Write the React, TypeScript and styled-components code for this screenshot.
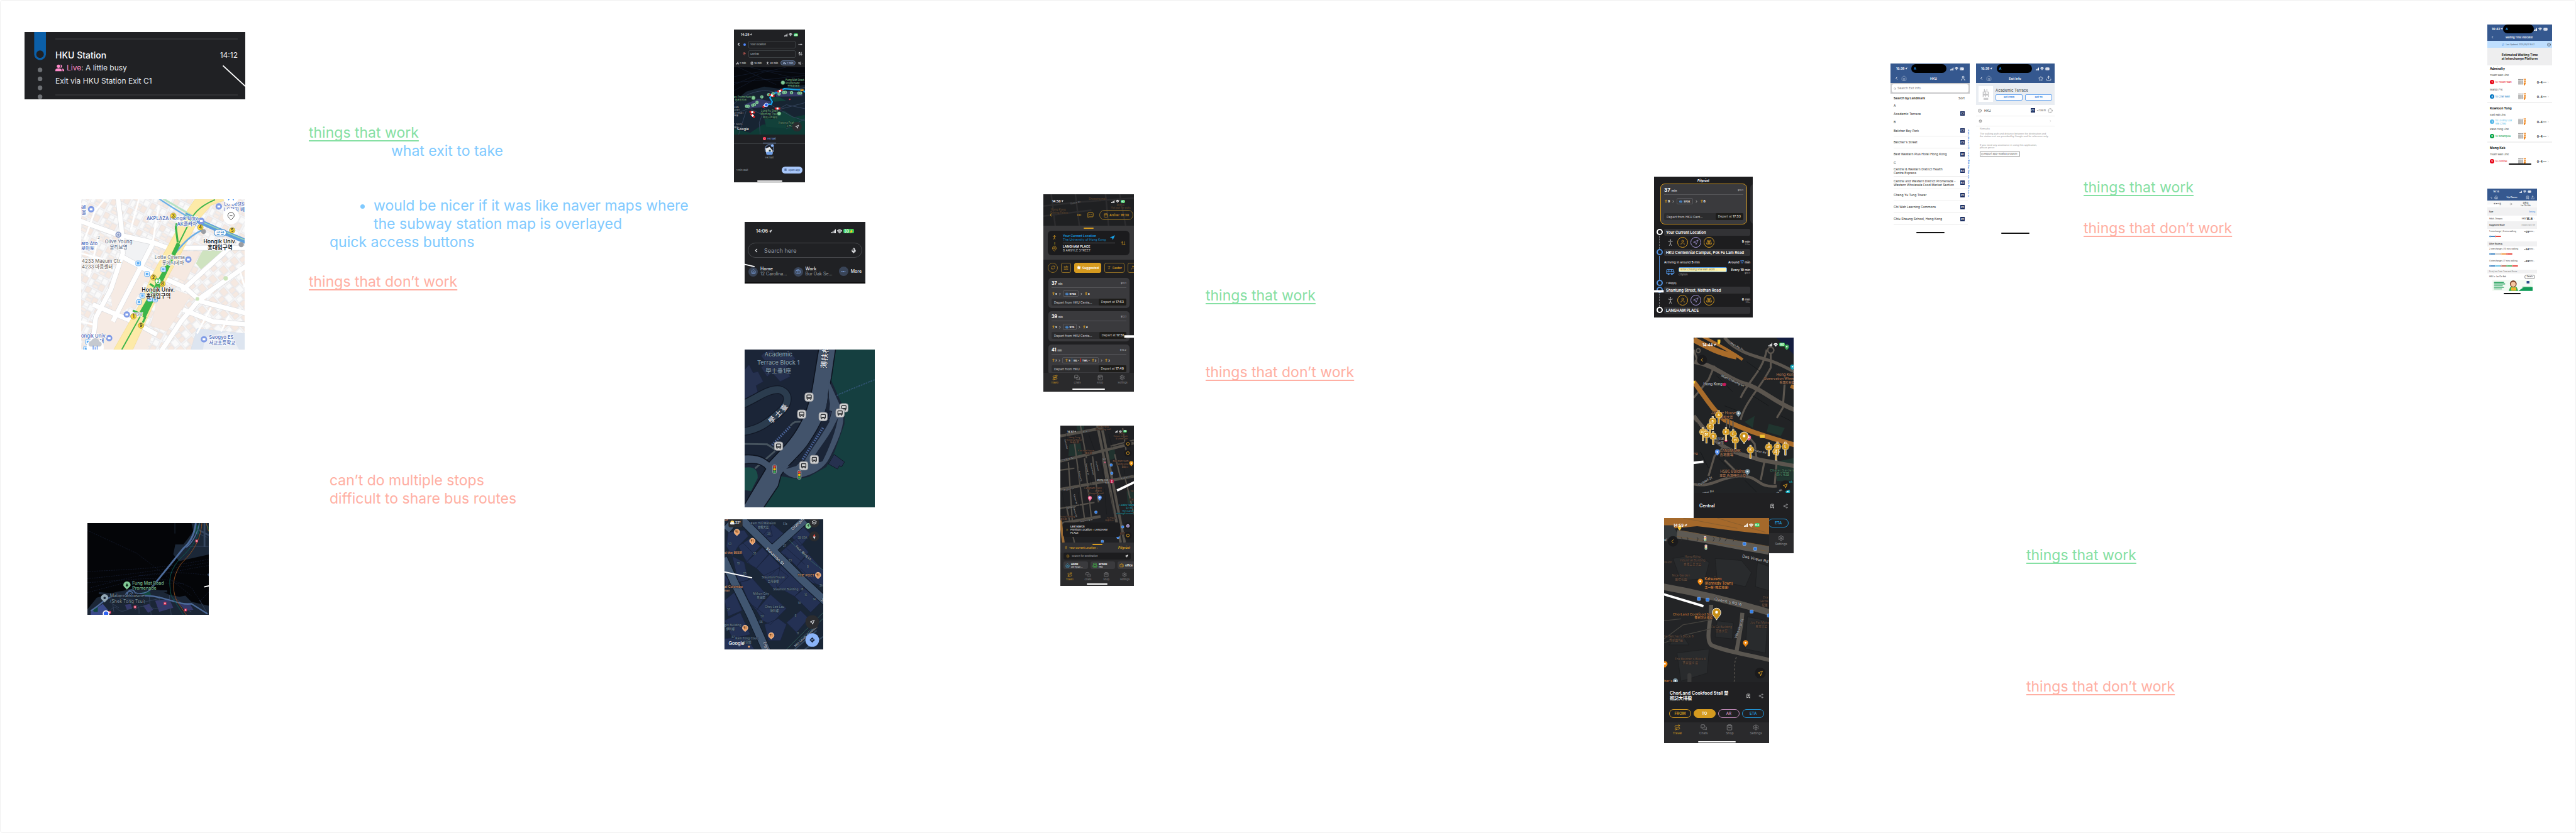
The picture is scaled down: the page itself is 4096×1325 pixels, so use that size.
import React from "react";
import styled, { createGlobalStyle, css } from "styled-components";
import {
  ArrowRight, ArrowUpDown, Bike, Binoculars, BookmarkPlus, Briefcase, Bus, Calendar, Car, ChevronLeft,
  ChevronRight, Crosshair, Ellipsis, House, Info, MapPin, MessageSquareMore, MessagesSquare, Mic, Navigation,
  PersonStanding, Plane, RefreshCw, Route, School, Search, Settings, Share2, ShoppingBag, SlidersHorizontal,
  Star, TrainFront, Upload, User, Wifi,
} from "lucide-react";

const GlobalStyle = createGlobalStyle`
  * { box-sizing: border-box; }
  body { margin: 0; background: #fff; font-family: Inter, "Noto Sans CJK SC", sans-serif; }
  button, input { font: inherit; color: inherit; margin: 0; padding: 0; border: 0; background: none; }
  h1, h2, h3, p, ul { margin: 0; padding: 0; font: inherit; list-style: none; }
  svg { display: block; flex: none; }
`;

/* ---------- board ---------- */

const Board = styled.main`
  position: relative;
  min-height: 100vh;
  border: 1px solid #f1f1f1;
  border-radius: 4px;
  overflow: hidden;
`;

const Pin = styled.section<{ $x: number; $y: number; $w: number; $h?: number; $bg?: string; $fg?: string }>`
  position: absolute;
  left: ${(p) => p.$x}px;
  top: ${(p) => p.$y}px;
  width: ${(p) => p.$w}px;
  ${(p) => p.$h && css`height: ${p.$h}px;`}
  background: ${(p) => p.$bg ?? "transparent"};
  color: ${(p) => p.$fg ?? "#fff"};
  overflow: hidden;
  display: flex;
  flex-direction: column;
`;

const Connectors = styled.svg`
  position: absolute;
  left: 0;
  top: 0;
  width: 4096px;
  height: 1325px;
  pointer-events: none;
  stroke: #fff;
`;

const GREEN = "#85e0a3";
const RED = "#ffafa3";
const BLUE = "#80caff";

const Note = styled.div<{ $x: number; $y: number; $tone: string }>`
  position: absolute;
  left: ${(p) => p.$x}px;
  top: ${(p) => p.$y}px;
  color: ${(p) => p.$tone};
  font-size: 23px;
  font-weight: 400;
  line-height: 29px;
  white-space: nowrap;
`;
const NoteTitle = styled.h2<{ $tone?: string }>`
  color: ${(p) => p.$tone ?? "inherit"};
  text-decoration: underline;
  text-decoration-thickness: 2px;
  text-decoration-skip-ink: none;
  text-underline-offset: 4px;
`;
const NoteLine = styled.p<{ $in: number }>`
  padding-left: ${(p) => p.$in}px;
`;
const NoteBullet = styled.li`
  display: list-item;
  list-style: disc outside;
  margin: 58px 0 0 103px;
`;

/* ---------- shared pieces ---------- */

const Row = styled.div<{ $h?: number; $gap?: number; $px?: number; $pl?: number; $j?: string; $a?: string; $bg?: string; $grow?: boolean }>`
  display: flex;
  flex: ${(p) => (p.$grow ? "1" : "none")};
  align-items: ${(p) => p.$a ?? "center"};
  justify-content: ${(p) => p.$j ?? "flex-start"};
  gap: ${(p) => p.$gap ?? 0}px;
  padding: 0 ${(p) => p.$px ?? 0}px;
  ${(p) => p.$pl && css`padding-left: ${p.$pl}px;`}
  ${(p) => p.$h && css`height: ${p.$h}px;`}
  ${(p) => p.$bg && css`background: ${p.$bg};`}
`;
const Col = styled.div<{ $gap?: number; $grow?: boolean; $a?: string; $px?: number }>`
  display: flex;
  flex-direction: column;
  min-width: 0;
  gap: ${(p) => p.$gap ?? 0}px;
  padding: 0 ${(p) => p.$px ?? 0}px;
  align-items: ${(p) => p.$a ?? "stretch"};
  ${(p) => p.$grow && css`flex: 1;`}
`;
const Txt = styled.span<{ $s?: number; $w?: number; $c?: string }>`
  font-size: ${(p) => p.$s ?? 5}px;
  line-height: ${(p) => (p.$s ?? 5) + 1}px;
  font-weight: ${(p) => p.$w ?? 400};
  color: ${(p) => p.$c ?? "inherit"};
  white-space: nowrap;
`;
const MapArt = styled.svg<{ $h: number }>`
  width: 100%;
  height: ${(p) => p.$h}px;
  flex: none;
`;
const HomeBar = styled.div<{ $w: number; $c?: string }>`
  width: ${(p) => p.$w}px;
  height: 2px;
  border-radius: 1px;
  background: ${(p) => p.$c ?? "#fff"};
  margin: 0 auto;
  flex: none;
`;
const StatusRow = styled.header<{ $h: number; $px: number; $over?: boolean }>`
  display: flex;
  flex: none;
  align-items: center;
  justify-content: space-between;
  height: ${(p) => p.$h}px;
  padding: 0 ${(p) => p.$px}px;
  ${(p) => p.$over && css`position: absolute; left: 0; right: 0; top: 0;`}
`;
const Battery = styled.span<{ $bg: string; $s: number }>`
  background: ${(p) => p.$bg};
  color: #fff;
  border-radius: 2px;
  font-size: ${(p) => p.$s}px;
  line-height: ${(p) => p.$s + 1}px;
  font-weight: 700;
  padding: 0 1px;
`;
const Island = styled.span`
  width: 56px;
  height: 14px;
  border-radius: 7px;
  background: #000;
  color: #2196f3;
  font-size: 5px;
  font-weight: 700;
  line-height: 14px;
  padding-left: 4px;
`;
const Signal = ({ s = 5 }: { s?: number }) => (
  <svg width={s} height={s} viewBox="0 0 10 10" fill="currentColor">
    <path d="M0 7h2v3H0zM2.7 5.5h2V10h-2zM5.4 3.5h2V10h-2zM8 1h2v9H8z" />
  </svg>
);
function Status(p: { time: string; pct: string; h: number; px: number; s?: number; tone?: string; island?: boolean; over?: boolean; plain?: boolean }) {
  const s = p.s ?? 5;
  return (
    <StatusRow $h={p.h} $px={p.px} $over={p.over}>
      <Row $gap={1}>
        <Txt $s={s} $w={600}>{p.time}</Txt>
        {!p.plain && <Navigation size={s - 1} fill="currentColor" strokeWidth={1} />}
      </Row>
      {p.island && <Island>A</Island>}
      <Row $gap={2}>
        <Signal s={s} />
        <Wifi size={s + 1} strokeWidth={4} />
        <Battery $bg={p.tone ?? "#34c759"} $s={s - 1}>{p.pct}</Battery>
      </Row>
    </StatusRow>
  );
}

type L = [number, number, string, number, string?, number?, string?, number?];
/* x, y, text, size, fill, rotation, anchor, weight */
const LabelGroup = styled.g`
  paint-order: stroke;
  stroke-linejoin: round;
`;
function Labels({ items, fill, halo, hw = 4 }: { items: L[]; fill: string; halo: string; hw?: number }) {
  return (
    <LabelGroup stroke={halo} strokeWidth={hw}>
      {items.map(([x, y, t, s, c, r, a, w], i) => (
        <text key={i} x={x} y={y} fontSize={s} fill={c ?? fill} textAnchor={(a ?? "middle") as "middle"}
          fontWeight={w ?? 500} transform={r ? `rotate(${r} ${x} ${y})` : undefined}>{t}</text>
      ))}
    </LabelGroup>
  );
}
const Drop = ({ x, y, c, r = 12 }: { x: number; y: number; c: string; r?: number }) => (
  <g transform={`translate(${x} ${y}) scale(${r / 12})`}>
    <path d="M0 18C-4 11-12 8-12-1a12 12 0 0 1 24 0C12 8 4 11 0 18Z" fill={c} />
    <circle r="4" cy="-1" fill="#fff" />
  </g>
);

/* ---------- station card ---------- */

const StationBody = styled.div`
  display: grid;
  grid-template-columns: 49px 1fr;
  padding-right: 12px;
  height: 107px;
`;
const StationInfo = styled.div`
  margin: 10px 0 6px;
  border-top: 2px solid #303134;
  border-bottom: 2px solid #303134;
  padding-top: 14px;
  display: flex;
  flex-direction: column;
`;
function StationCard() {
  return (
    <Pin $x={38} $y={50} $w={351} $h={107} $bg="#202124" $fg="#e8eaed">
      <StationBody>
        <svg width="49" height="107" viewBox="0 0 147 322">
          <path d="M46 0h56v106a28 28 0 0 1-56 0Z" fill="#0b5fa8" />
          <circle cx="74" cy="106" r="18" fill="#202124" />
          {[181, 224, 267, 310].map((y) => <circle key={y} cx="74" cy={y} r="11" fill="#6d7074" />)}
        </svg>
        <StationInfo>
          <Row $j="space-between" $h={20}>
            <Txt $s={14} $w={500} $c="#fff">HKU Station</Txt>
            <Txt $s={12}>14:12</Txt>
          </Row>
          <Row $gap={4} $h={21}>
            <svg width="14" height="12" viewBox="0 0 42 34" fill="#ff8bcb">
              <circle cx="15" cy="9" r="8" /><path d="M0 33v-5c0-7 8-9 15-9s15 2 15 9v5Z" />
              <path d="M24 1a8 8 0 1 1 0 16c4-5 4-11 0-16ZM31 20c7 1 11 4 11 8v5h-8v-5c0-3-1-6-3-8Z" />
            </svg>
            <Txt $s={12}><Txt as="b" $s={12} $w={400} $c="#ff8bcb">Live</Txt>: A little busy</Txt>
          </Row>
          <Row $h={21}><Txt $s={12}>Exit via HKU Station Exit C1</Txt></Row>
        </StationInfo>
      </StationBody>
    </Pin>
  );
}

/* ---------- Hongik map ---------- */

const HONGIK_ROADS = "M30 135 220 205 400 245 520 290M235 310 400 400 560 470 640 540 870 600M225 20 242 160 250 300 190 480 115 620 95 790M400 250 200 640M870 360 640 520 540 640 440 790M100 555 300 640 420 705M550 580 700 640 870 655M790 265 545 485M500 272H870";

function HongikMap() {
  const exits: [number, number, string][] = [[502, 112, "3"], [637, 170, "4"], [796, 185, "5"], [403, 420, "2"], [448, 452, "8"], [303, 614, "1"], [341, 660, "9"]];
  const stops = [[327, 350], [371, 403], [452, 380], [348, 511], [385, 527], [411, 530], [331, 543], [76, 742], [66, 776]];
  const pois = [[92, 80], [729, 66], [642, 138], [577, 331], [270, 605], [182, 723], [655, 729]];
  return (
    <Pin $x={128} $y={316} $w={260} $h={239}>
      <MapArt $h={239} viewBox="42 30 816 750" preserveAspectRatio="xMidYMid slice">
        <defs>
          <pattern id="blocks" width="92" height="74" patternUnits="userSpaceOnUse" patternTransform="rotate(28)">
            <rect width="92" height="74" fill="#f5f5f6" />
            <g stroke="#d9dadd" strokeWidth="1.5">
              <path fill="#f6e9e1" d="M4 4h26v28H4zM60 38h26v32H60z" /><path fill="#fafafa" d="M33 4h24v20H33zM60 4h28v30H60zM4 36h20v34H4z" />
              <path fill="#f8ede6" d="M28 36h28v14H28zM28 54h28v16H28z" />
            </g>
          </pattern>
          <pattern id="blocks2" width="70" height="84" patternUnits="userSpaceOnUse" patternTransform="rotate(-40)">
            <rect width="70" height="84" fill="#f5f5f6" />
            <g stroke="#d9dadd" strokeWidth="1.5">
              <path fill="#fafafa" d="M4 4h28v24H4zM36 44h30v36H36z" /><path fill="#f6e9e1" d="M36 4h30v36H36zM4 32h28v22H4zM4 58h28v22H4z" />
            </g>
          </pattern>
        </defs>
        <rect x="42" y="30" width="816" height="750" fill="url(#blocks)" />
        <path d="M560 470 780 270H858V780H450L540 640Z" fill="url(#blocks2)" />
        <path d="M120 560 240 620 330 660 400 700 370 780H110Z" fill="#f6ebe4" />
        <path d="M190 480 250 330 380 400 300 560 200 620Z" fill="#f6ebe4" />
        <path d="M420 540 500 480 590 510 470 690 390 660Z" fill="#f6e9e1" stroke="#e5d8cf" />
        <path d="M520 290H640L560 440 470 400Z" fill="#f6e9e1" stroke="#e5d8cf" />
        <path d="M265 225 395 255 345 350 255 320Z" fill="#f1f2f4" stroke="#dcdde0" />
        <path d="M640 300 655 275H785L700 330 640 380 615 350Z" fill="#cfe3c0" />
        <path d="M620 675 858 700V780H590Z" fill="#dde5f0" stroke="#c9d4e4" /><path d="M660 720 780 690 830 780H650Z" fill="#eceff4" />
        <path fill="none" stroke="#d8d9dc" strokeWidth="27" d={HONGIK_ROADS} />
        <path fill="none" stroke="#fff" strokeWidth="23" d={HONGIK_ROADS} />
        <path fill="none" stroke="#fff" strokeWidth="9" d="M60 230 110 90 160 30M330 30 290 180M430 60 400 240M690 570 620 700M780 610 740 690M830 370 858 470M42 640 120 660M640 540 720 470M130 210 80 420M42 300 230 350" />
        <path d="M205 780 330 560 400 400 510 200 575 80 610 30H770L690 60 630 130 540 300 430 500 300 780Z" fill="#fdeaa8" stroke="#f3d98a" strokeWidth="2" />
        <g fill="none">
          <path d="M432 28C480 60 540 100 600 130" stroke="#6bb1e8" strokeWidth="7" /><path d="M450 26 600 115" stroke="#b6e2c2" strokeWidth="9" />
          <path d="M560 108 720 180 870 243" stroke="#5e9fdc" strokeWidth="24" /><path d="M560 105 720 175 870 238" stroke="#9ed8b0" strokeWidth="5" />
          <path d="M515 295C560 240 590 210 650 182" stroke="#69ade6" strokeWidth="8" />
          <path d="M245 780 345 600M525 260 580 150C600 110 620 70 710 32" stroke="#3cb54a" strokeWidth="6" />
          <path d="M514 165 524 245M514 180 519 150M385 452 405 465M350 610 362 620 350 645M300 585 335 600" stroke="#3cb54a" strokeWidth="10" />
        </g>
        <path d="M520 245 537 257 365 618 332 595 410 460 480 330Z" fill="#3cb54a" />
        {stops.map(([x, y]) => <g key={x}><rect x={x - 12} y={y - 12} width="24" height="24" rx="5" fill="#e9f4ff" stroke="#5badf5" strokeWidth="3" /><path d={`M${x - 6} ${y - 6}h12v11h-12z`} fill="#5badf5" /></g>)}
        {pois.map(([x, y]) => <g key={x}><circle cx={x} cy={y} r="16" fill="#7f9be6" /><path d={`M${x - 7} ${y - 5}h14v10h-14z`} fill="#fff" /></g>)}
        <circle cx="228" cy="207" r="15" fill="#8b9cc8" /><circle cx="228" cy="207" r="8" fill="none" stroke="#fff" strokeWidth="3" />
        <circle cx="763" cy="425" r="11" fill="#cbe4b9" /><circle cx="622" cy="527" r="9" fill="#cbe4b9" />
        <circle cx="841" cy="256" r="13" fill="#9a9da3" /><circle cx="653" cy="191" r="12" fill="#9a9da3" />
        <Labels halo="#fff" fill="#4a68b8" hw={5} items={[
          [42, 76, "all", 24, undefined, 0, "start"], [45, 104, "볼", 24, undefined, 0, "start"],
          [500, 133, "AKPLAZA Hongik Univ.", 24], [570, 162, "AK플라자", 24],
          [755, 62, "LG Bestsh", 24, undefined, 0, "start"], [755, 90, "LG전자 베스", 24, undefined, 0, "start"],
          [229, 250, "Olive Young", 24, "#6a7590"], [229, 278, "올리브영", 24, "#6a7590"],
          [42, 259, "aro Ato", 24, undefined, 0, "start"], [42, 285, "로아토", 24, undefined, 0, "start"],
          [45, 348, "4233 Maeum Ctr.", 24, "#77706c", 0, "start"], [45, 376, "4233 마음센터", 24, "#77706c", 0, "start"],
          [484, 328, "Lotte Cinema", 24, "#7c7f88"], [500, 356, "롯데시네마", 24, "#7c7f88"],
          [735, 250, "Hongik Univ.", 27, "#222", 0, "middle", 600], [735, 282, "홍대입구역", 27, "#222", 0, "middle", 600],
          [427, 491, "Hongik Univ.", 27, "#222", 0, "middle", 600], [427, 523, "홍대입구역", 27, "#222", 0, "middle", 600],
          [42, 719, "ongik Univ.", 24, undefined, 0, "start"], [145, 747, "대", 24],
          [680, 726, "Seogyo ES", 24, undefined, 0, "start"], [680, 754, "서교초등학교", 24, undefined, 0, "start"],
          [325, 613, "CGV", 22, "#7c7f88"], [130, 228, "2", 20, "#8a8a8a"],
        ]} />
        {exits.map(([x, y, t]) => <g key={t}><circle cx={x} cy={y} r="14" fill="#fcd93a" stroke="#8a7a30" strokeWidth="2" /><text x={x} y={y + 8} fontSize="22" fontWeight="600" textAnchor="middle" fill="#333">{t}</text></g>)}
        <circle cx="426" cy="439" r="15" fill="#fff" stroke="#3cb54a" strokeWidth="4" /><text x="426" y="447" fontSize="22" fontWeight="700" textAnchor="middle" fill="#3cb54a">2</text>
        <rect x="706" y="181" width="60" height="32" rx="15" fill="#fff" stroke="#5a9bd8" strokeWidth="4" /><text x="736" y="206" fontSize="23" fontWeight="600" textAnchor="middle" fill="#4a8fd0">공항</text>
        <circle cx="790" cy="16" r="40" fill="#fff" /><path d="M776 36 790 24 804 36V20H776Z" fill="#1b7cf2" />
        <circle cx="790" cy="115" r="40" fill="#fff" /><path d="M790 133c-5-8-16-12-16-22a16 16 0 0 1 32 0c0 10-11 14-16 22ZM783 111h14" fill="none" stroke="#444" strokeWidth="3" />
        <circle cx="112" cy="768" r="43" fill="#fff" /><path d="M88 765a14 14 0 0 1 4-27 22 22 0 0 1 42 2 13 13 0 0 1 2 25Z" fill="#c5c9d0" /><path d="M102 760v20M112 768v12M122 760v20" stroke="#5b8ff0" strokeWidth="4" />
      </MapArt>
    </Pin>
  );
}

/* ---------- dark coastline map ---------- */

function CoastMap() {
  return (
    <Pin $x={138} $y={831} $w={193} $h={146}>
      <MapArt $h={146} viewBox="42 39 606 456" preserveAspectRatio="xMidYMid slice">
        <rect x="40" y="35" width="612" height="465" fill="#040508" />
        <g fill="none" stroke="#18213a" strokeWidth="2" strokeDasharray="7 5">
          <path d="M42 75 290 190 420 290 560 400M42 280C220 270 400 270 648 218M42 315C220 300 420 270 648 235M60 360C250 310 400 260 648 300M42 335C300 320 420 290 560 360L600 420M300 300C420 300 560 260 648 250M648 380 600 430M42 385 250 330 520 340" />
        </g>
        <path d="M478 39v52" stroke="#1d2a3d" strokeWidth="3" />
        <path d="M560 39H648V195L500 228 470 195 480 145H520L570 80Z" fill="#1b2737" />
        <path d="M42 470 90 410 190 380 270 368 400 372 450 395 500 405 530 400 560 430 648 450V500H42Z" fill="#1b2636" />
        <path d="M100 387 190 395 250 372 330 378 440 378" stroke="#1b2636" strokeWidth="10" fill="none" />
        <path d="M60 478 120 440 145 470 130 495H60Z" fill="#3b4a8a" /><path d="M320 450 350 440 370 470 345 485ZM380 425 450 415 470 460 400 480ZM500 440 550 435 570 470 530 475ZM230 445 260 440 265 465 240 470Z" fill="#35396b" />
        <path d="M70 465 95 455V480H75ZM310 385 350 375 360 395 330 400ZM585 45 600 60 590 95 575 90ZM630 40 648 60V90Z" fill="#12483f" />
        <g fill="none" stroke="#33415a" strokeWidth="3">
          <path d="M150 480C200 420 180 500 240 470S300 440 300 490M150 430 200 460M280 470C330 420 380 500 440 440S520 470 560 480M165 410 175 480M200 410 330 430 420 410M350 400 360 495M590 90 640 110M550 155 645 155M600 420 640 490M400 400V430M450 395 460 500" />
        </g>
        <g fill="none" stroke="#4d6b9a">
          <path d="M582 39C575 90 560 130 520 165L350 375" strokeWidth="9" /><path d="M600 39C590 90 570 130 535 160" strokeWidth="5" />
          <path d="M60 475C120 440 130 405 190 400L340 400C420 400 500 450 560 440L640 490" strokeWidth="7" />
          <path d="M240 395C250 360 275 370 280 385 310 395 340 385 355 370M230 400C240 375 262 372 270 390" strokeWidth="5" />
        </g>
        <path d="M625 39V158M590 70 648 100" stroke="#35465f" strokeWidth="9" fill="none" />
        <path d="M600 39C600 120 560 160 500 220 440 290 450 340 460 400L520 495" stroke="#0c5b50" strokeWidth="3" fill="none" />
        <path d="M612 39C606 130 560 190 510 240 460 310 465 380 490 430L535 495M634 39 645 80" stroke="#91501f" strokeWidth="3" fill="none" />
        {[[586, 128], [429, 438], [280, 456], [154, 483], [531, 471]].map(([x, y]) => <rect key={x} x={x - 5} y={y - 5} width="10" height="10" fill="#f0c5d0" stroke="#e0284f" strokeWidth="3" />)}
        <path d="M130 434C120 422 111 420 111 410a18 18 0 0 1 36 0c0 10-9 12-18 24Z" fill="#93a7b5" /><circle cx="129" cy="411" r="6" fill="#1b2636" />
        <path d="M240 370C230 358 222 356 222 347a18 18 0 0 1 36 0c0 9-9 11-18 23Z" fill="#81c995" /><path d="M240 337l7 14h-5v6h-4v-6h-5Z" fill="#12301f" />
        <circle cx="136" cy="489" r="14" fill="#2f62f0" stroke="#fff" strokeWidth="5" />
        <path d="M638 292 648 289V306Z" fill="#35465f" />
        <Labels halo="#0a0d14" fill="#72b284" hw={3} items={[
          [266, 345, "Fung Mat Road", 22, undefined, 0, "start"], [266, 371, "Promenade", 22, undefined, 0, "start"],
          [155, 409, "Malacca Cuisine", 22, "#7b8d9c", 0, "start"], [155, 435, "(Shek Tong Tsui)", 22, "#7b8d9c", 0, "start"],
        ]} />
      </MapArt>
    </Pin>
  );
}

/* ---------- taxi phone ---------- */

const DarkField = styled.input`
  flex: 1;
  min-width: 0;
  height: 12px;
  border: 1px solid #3c4043;
  border-radius: 2px;
  padding: 0 2px;
  font-size: 4px;
  line-height: 10px;
  color: #bdc1c6;
`;
const Mode = styled.button<{ $on?: boolean }>`
  display: flex;
  align-items: center;
  gap: 1px;
  height: 8px;
  padding: 0 3px;
  border-radius: 4px;
  font-size: 4px;
  line-height: 5px;
  white-space: nowrap;
  ${(p) => p.$on && css`background: #394457; color: #c6dafc; border: 1px solid #5c7091;`}
`;
const TaxiTab = styled.button`
  display: flex;
  align-items: center;
  gap: 2px;
  height: 14px;
  font-size: 4px;
  color: #8ab4f8;
  border-bottom: 1px solid #6d8fc9;
`;
const OpenApp = styled.button`
  height: 11px;
  padding: 0 4px;
  border-radius: 6px;
  background: #a8c7fa;
  color: #1f3765;
  font-size: 4px;
  display: flex;
  align-items: center;
  gap: 3px;
`;
function TaxiPhone() {
  return (
    <Pin $x={1166} $y={46} $w={113} $h={243} $bg="#202124" $fg="#e8eaed">
      <Status time="14:28" pct="35" h={16} px={11} />
      <Row $h={15} $gap={4} $px={4}>
        <ChevronLeft size={7} strokeWidth={4} />
        <svg width="4" height="4" viewBox="0 0 4 4"><circle cx="2" cy="2" r="2" fill="#4f86f7" /></svg>
        <DarkField aria-label="From" defaultValue="Your location" />
        <Ellipsis size={7} strokeWidth={4} />
      </Row>
      <Row $h={15} $gap={4} $px={4} $pl={14}>
        <MapPin size={5} color="#e0685e" strokeWidth={3} />
        <DarkField aria-label="To" defaultValue="Central" />
        <ArrowUpDown size={7} strokeWidth={3} />
      </Row>
      <Row $h={14} $j="space-between">
        <Mode><Bike size={5} strokeWidth={3} />7 min</Mode>
        <Mode><TrainFront size={5} strokeWidth={3} />10 min</Mode>
        <Mode><PersonStanding size={5} strokeWidth={3} />42 min</Mode>
        <Mode $on><Car size={5} strokeWidth={3} />7 min</Mode>
        <Mode aria-label="Flights"><Plane size={5} strokeWidth={3} />-</Mode>
      </Row>
      <MapArt $h={107} viewBox="39 213 354 336" preserveAspectRatio="xMidYMid slice">
        <rect x="30" y="205" width="372" height="352" fill="#06080d" />
        <path d="M39 260 200 230 393 245M39 300 180 240 300 213M60 213 250 300M120 213 393 280M39 290 393 255M39 330 150 270 393 290" stroke="#1c2742" strokeWidth="1.5" fill="none" />
        <path d="M39 385 100 335 190 310 260 320 393 300V557H39Z" fill="#172432" />
        <path d="M39 520 120 540 180 500 260 490 300 470 393 450V557H39Z" fill="#0f3b36" /><path d="M190 470 290 430 350 470 320 520 200 510ZM220 365 260 360 300 380 240 385Z" fill="#12413a" />
        <path d="M90 400 160 370 230 385 200 410 110 420ZM240 330 320 335 380 340 380 358 250 360Z" fill="#343a66" />
        <g stroke="#35455e" strokeWidth="3" fill="none"><path d="M39 395C100 340 180 320 230 335S330 330 400 312M60 440 160 400 230 440 300 400 393 420M170 550 165 490 190 420M220 400 330 460 393 480M240 430 393 390M100 430 60 557M300 520 393 470M120 420 200 460" /></g>
        <path d="M200 398 225 398 230 385 218 365 228 345 262 338 290 320 370 326" fill="none" stroke="#17a4ec" strokeWidth="7" strokeLinejoin="round" />
        <path d="M370 328h16" stroke="#f5a623" strokeWidth="8" /><path d="M386 330 393 338" stroke="#17a4ec" strokeWidth="7" />
        {[[178, 361], [154, 388], [133, 402], [141, 400], [102, 408], [110, 408], [212, 350], [234, 345], [264, 346], [287, 339], [295, 338], [326, 340], [362, 342], [371, 342]].map(([x, y]) => <g key={x}><circle cx={x} cy={y} r="8" fill="#81c995" /><path d={`M${x} ${y - 4}v8`} stroke="#134" strokeWidth="2" /></g>)}
        {[[228, 354, 20], [268, 331, -20], [256, 419, 0], [130, 437, 10], [132, 454, 45], [192, 404, -50]].map(([x, y, r]) => <g key={x} transform={`rotate(${r} ${x} ${y})`}><rect x={x - 14} y={y - 5} width="28" height="10" rx="3" fill="#e02020" /><rect x={x - 5} y={y - 5} width="10" height="10" fill="#fff" /></g>)}
        <circle cx="200" cy="401" r="9" fill="#2f62f0" stroke="#dfe7ff" strokeWidth="3" />
        <circle cx="317" cy="373" r="4" fill="#e0284f" />
        {[[283, 290], [136, 366], [264, 444]].map(([x, y]) => <circle key={x} cx={x} cy={y} r="10" fill="#81c995" stroke="#25523a" strokeWidth="2" />)}
        <Labels halo="#0a0d14" fill="#6cab7e" hw={2} items={[
          [342, 282, "Fung Mat Road", 13], [332, 297, "Promenade", 13], [336, 311, "豐物道海濱", 12],
          [39, 366, "ay Promenade", 13, undefined, 0, "start"], [42, 380, "灣海濱長廊", 12, undefined, 0, "start"],
          [216, 435, "Lung Fu Shan", 13], [212, 451, "Morning Trail", 13], [220, 466, "龍虎山晨運徑", 12],
          [300, 494, "Victoria Peak", 13], [318, 510, "太平山", 12],
          [39, 416, "ANN", 11, "#9aa5b1", 0, "start"], [39, 430, "LLMT", 11, "#9aa5b1", 0, "start"], [39, 444, "OTTAGE)", 11, "#9aa5b1", 0, "start"],
          [39, 458, "寧屋", 11, "#9aa5b1", 0, "start"], [39, 503, "T DAVIS", 11, "#9aa5b1", 0, "start"], [39, 518, "摩星", 11, "#9aa5b1", 0, "start"],
          [55, 528, "Google", 17, "#e8eaed", 0, "start", 600],
        ]} />
        <circle cx="353" cy="510" r="24" fill="#2b2c2f" /><path d="M361 502 346 509l7 2 2 7Z" fill="none" stroke="#e8eaed" strokeWidth="2.5" />
      </MapArt>
      <Row $j="center" $h={14}><TaxiTab><svg width="5" height="5" viewBox="0 0 5 5"><rect width="5" height="5" rx="1" fill="#e3203c" /><circle cx="2.5" cy="2.5" r="1.2" fill="none" stroke="#fff" strokeWidth=".6" /></svg>HKTaxi</TaxiTab></Row>
      <Row $h={1} $bg="#3c4043" />
      <Col $a="center" $gap={1}>
        <svg width="15" height="18" viewBox="0 0 46 54">
          <circle cx="23" cy="25" r="22" fill="#20242c" stroke="#8ab4f8" strokeWidth="3" /><path d="M3 22 24 14 40 34 30 44H8Z" fill="#e8e9eb" /><circle cx="25" cy="32" r="5" fill="#20242c" stroke="#74c0c0" strokeWidth="2" />
          <circle cx="37" cy="7" r="7" fill="#8ab4f8" /><rect x="7" y="38" width="32" height="14" rx="6" fill="#6f9fe8" />
        </svg>
        <Txt $s={4} $c="#9aa0a6">HKTaxi</Txt>
      </Col>
      <Row $j="space-between" $px={4} $h={34}><Txt $s={4} $c="#9aa0a6">1 min wait</Txt><OpenApp><SlidersHorizontal size={4} strokeWidth={3} />Open app</OpenApp></Row>
      <HomeBar $w={40} />
    </Pin>
  );
}

/* ---------- search card ---------- */

const SearchPill = styled.label`
  display: flex;
  align-items: center;
  gap: 8px;
  height: 24px;
  margin: 0 5px;
  padding: 0 8px;
  border: 1px solid #47494d;
  border-radius: 12px;
`;
const PlainInput = styled.input<{ $s: number; $c: string }>`
  flex: 1;
  min-width: 0;
  font-size: ${(p) => p.$s}px;
  line-height: ${(p) => p.$s + 2}px;
  outline: none;
  &::placeholder { color: ${(p) => p.$c}; opacity: 1; }
`;
const Quick = styled.button`
  display: flex;
  align-items: center;
  gap: 4px;
  text-align: left;
`;
const Bubble = styled.span`
  display: grid;
  place-items: center;
  width: 15px;
  height: 15px;
  border-radius: 50%;
  background: #394457;
  color: #8ab4f8;
`;
function SearchCard() {
  return (
    <Pin $x={1183} $y={352} $w={192} $h={98} $bg="#202124" $fg="#e8eaed">
      <Status time="14:06" pct="33⚡" h={29} px={18} s={7} />
      <Row $h={4} />
      <SearchPill>
        <ChevronLeft size={9} strokeWidth={3} />
        <PlainInput $s={9} $c="#9aa0a6" aria-label="Search here" placeholder="Search here" />
        <Mic size={9} strokeWidth={3} />
      </SearchPill>
      <Row $h={14} />
      <Row $h={25} $px={6} $j="space-between" $a="flex-start">
        <Quick><Bubble><House size={8} /></Bubble><Col><Txt $s={7} $w={500}>Home</Txt><Txt $s={7} $c="#9aa0a6">12 Carolina...</Txt></Col></Quick>
        <Quick><Bubble><Briefcase size={8} /></Bubble><Col><Txt $s={7} $w={500}>Work</Txt><Txt $s={7} $c="#9aa0a6">Bur Oak Se...</Txt></Col></Quick>
        <Quick><Bubble><Ellipsis size={8} strokeWidth={3} /></Bubble><Txt $s={7} $w={500}>More</Txt></Quick>
      </Row>
      <Row $h={2} $bg="#0c0c0d" />
    </Pin>
  );
}

/* ---------- junction map ---------- */

function JunctionMap() {
  const stops = [[444, 267], [407, 352], [514, 364], [617, 320], [598, 346], [292, 511], [470, 578], [417, 609]];
  return (
    <Pin $x={1183} $y={555} $w={207} $h={251}>
      <MapArt $h={251} viewBox="123 30 648 786" preserveAspectRatio="xMidYMid slice">
        <rect x="120" y="26" width="656" height="796" fill="#1b2537" />
        <path d="M123 130 145 105 165 145 190 140 216 190 180 210 190 245 123 280ZM205 62 230 95 205 120 235 165 260 145 300 190 350 165 330 120 375 75 350 40 290 60 260 30 215 50Z" fill="#26314f" stroke="#1b2440" strokeWidth="3" />
        <path d="M575 26H776V822H210L300 660 385 675 440 665 530 615 570 540 620 400 620 330 550 175Z" fill="#153f40" />
        <path d="M123 618C170 610 190 630 188 670L155 735 123 730Z" fill="#1a4d49" />
        <path d="M110 305C190 270 240 225 295 230 350 245 350 300 290 350 230 400 190 430 110 440" fill="none" stroke="#121927" strokeWidth="42" />
        <path d="M110 305C190 270 240 225 295 230 350 245 350 300 290 350 230 400 190 430 110 440" fill="none" stroke="#2b3c4e" strokeWidth="34" />
        <path d="M110 500 235 502 275 528M175 622 275 535M350 410C370 385 385 390 405 390M375 570 412 580" stroke="#47545f" strokeWidth="9" fill="none" />
        <path d="M492 26 460 220C440 330 400 420 330 500L245 590C210 560 170 550 110 556V602C170 590 210 600 228 625L110 822H215L290 710 305 655C340 600 400 560 440 500 500 410 540 330 540 250L555 170 576 26Z" fill="#42536b" stroke="#0e1420" strokeWidth="5" />
        <path d="M540 180 545 390C500 470 430 560 420 590L300 620C330 660 370 680 410 665 470 650 520 620 545 570 590 480 625 400 612 340Z" fill="#42536b" />
        <path d="M538 245 548 300 540 370C500 430 450 500 410 580L380 610 330 625C400 560 470 470 500 400 525 350 535 300 538 245ZM570 405 588 370C575 450 530 550 512 585 490 600 450 585 470 560 510 500 550 450 570 405Z" fill="#1b2537" />
        <path d="M513 420 410 580" stroke="#4a6397" strokeWidth="13" strokeDasharray="6 6" fill="none" />
        <path d="M348 415 255 510" stroke="#4a6397" strokeWidth="12" strokeDasharray="6 6" fill="none" />
        <path d="M582 258 660 225 776 178" stroke="#3f5f8c" strokeWidth="4" strokeDasharray="8 5" fill="none" />
        <path d="M540 600 568 552 620 590 605 615 595 608 585 625ZM545 335 556 338 546 375 538 372Z" fill="#26314f" stroke="#121927" strokeWidth="3" />
        {stops.map(([x, y]) => (
          <g key={x} transform={`translate(${x} ${y})`}>
            <rect x="-21" y="-21" width="42" height="42" rx="11" fill="#d3d3d3" stroke="#96999d" strokeWidth="3" />
            <path fillRule="evenodd" d="M-13-8q0-5 5-5H8q5 0 5 5V8h-3v5H5V8H-5v5h-5V8h-3ZM-9-8V1H9V-8ZM-9 4v2h4V4ZM5 4v2h4V4Z" fill="#2a2c30" />
          </g>
        ))}
        {[[272, 626], [395, 654]].map(([x, y]) => (
          <g key={x}><rect x={x - 9} y={y - 22} width="18" height="44" rx="7" fill="#3b3f45" stroke="#c3c6ca" strokeWidth="2" />
            <circle cx={x} cy={y - 13} r="6" fill="#ea4335" /><circle cx={x} cy={y} r="6" fill="#fbbc04" /><circle cx={x} cy={y + 13} r="6" fill="#34a853" /></g>
        ))}
        <Labels halo="#1b2537" fill="#8097a8" items={[
          [291, 63, "Academic", 29], [291, 104, "Terrace Block 1", 29], [291, 147, "學士臺1座", 29],
          [268, 388, "學", 34, "#e3e6ea", -48], [300, 358, "士", 34, "#e3e6ea", -48], [330, 327, "臺", 34, "#e3e6ea", -55],
          [532, 106, "薄", 38, "#e3e6ea", -86], [536, 68, "扶", 38, "#e3e6ea", -86], [540, 32, "林", 38, "#e3e6ea", -80],
        ]} />
      </MapArt>
    </Pin>
  );
}

/* ---------- Staunton street map ---------- */

const STAUNTON_ROADS = "M100 870 250 1020 400 1170 530 1290M250 1035 420 880M15 1070 70 1190 150 1350 230 1530M30 930 60 895";

function StauntonMap() {
  const food = [[83, 938], [160, 983], [124, 1416], [254, 1453], [487, 1153]];
  return (
    <Pin $x={1151} $y={825} $w={157} $h={207}>
      <MapArt $h={207} viewBox="21 876 492 648" preserveAspectRatio="xMidYMid slice">
        <rect x="18" y="872" width="500" height="656" fill="#1a2636" />
        <g fill="#26335a" stroke="#1a2440" strokeWidth="3" opacity=".85">
          <path d="M40 940 120 930 140 960 90 1010 60 1060 30 1010ZM90 1010 150 970 200 1010 130 1090ZM130 1090 210 1015 240 1050 180 1120ZM180 1120 245 1050 300 1110 230 1170ZM210 1160 290 1120 340 1160 270 1230ZM300 1100 350 1150 420 1210 370 1260 280 1210ZM60 1060 120 1090 140 1180 90 1190ZM100 1190 160 1170 230 1250 180 1330 140 1280ZM180 1330 250 1250 330 1320 250 1400 210 1380ZM220 1400 290 1370 330 1400 300 1480 240 1480ZM330 1390 400 1330 440 1370 380 1440ZM370 1260 420 1220 500 1290 450 1340ZM150 890 240 880 260 960 200 970ZM200 970 260 900 320 950 260 1010ZM300 1040 380 970 440 1040 380 1110ZM380 1110 440 1050 513 1130V1210L450 1190ZM350 960 400 900 450 950 400 1010ZM21 1280 70 1240 110 1330 40 1360ZM21 1380 100 1340 150 1450 60 1470ZM21 1470 130 1460 170 1524H21ZM21 1150 45 1180 30 1230Z" />
          <path d="M80 1030 150 1100M110 990 170 1050M210 1170 300 1250M320 1050 400 1130M330 1020 420 1100M400 1120 480 1200M130 1280 220 1350M240 1300 300 1360" fill="none" />
        </g>
        <path d={STAUNTON_ROADS} stroke="#0f1826" strokeWidth="44" fill="none" />
        <path d={STAUNTON_ROADS} stroke="#415671" strokeWidth="38" fill="none" />
        <path d="M345 980 420 1060 513 1130M330 1524 513 1340M390 1480 513 1370" stroke="#3f7a6b" strokeWidth="3" strokeDasharray="6 3" fill="none" />
        <path d="M370 1524 480 1430M420 1524 513 1460" stroke="#33465c" strokeWidth="7" fill="none" />
        {food.map(([x, y]) => <g key={x}><path d={`M${x} ${y + 20}c-4-6-14-9-14-19a14 14 0 0 1 28 0c0 10-10 13-14 19Z`} fill="#f0a56b" stroke="#f5d2b5" strokeWidth="2" /><path d={`M${x - 4} ${y - 7}v14M${x + 4} ${y - 7}v14M${x - 7} ${y - 6}v4h6v-4`} stroke="#4a2b12" strokeWidth="2" fill="none" /></g>)}
        <circle cx="143" cy="1510" r="5" fill="#f0a56b" />
        <Labels halo="#1a2636" fill="#71879a" hw={3} items={[
          [214, 901, "Kam Hoi Mansion", 15], [214, 921, "金備大廈", 14], [264, 1169, "Staunton House", 15], [264, 1188, "士丹頓樓", 14],
          [326, 1231, "Staunton Building", 15], [203, 1251, "Million City", 15], [203, 1270, "萬城閣", 14], [270, 1316, "Choy Lee Lau", 15], [270, 1336, "財利樓", 14],
          [133, 1473, "Kam Tong Court", 15], [133, 1492, "金堂閣", 14], [21, 1408, "gin Building", 15, undefined, 0, "start"], [30, 1427, "伊利樓", 14, undefined, 0, "start"],
          [21, 1047, "d the BEER", 17, "#d9925f", 0, "start"], [21, 1218, "al Colombo", 17, "#d9925f", 0, "start"], [21, 1237, "man", 13, "#d9925f", 0, "start"], [427, 1160, "THE POET", 17, "#d9925f"], [21, 886, "ur", 17, "#d9925f", 0, "start"],
          [268, 1065, "Staunton St", 21, "#d5dae0", 44, "middle", 600], [390, 905, "Graham", 21, "#d5dae0", -42], [410, 1047, "Tsun Wing Ln", 16, "#a9b4bf", 43], [222, 1510, "Elgin", 20, "#d5dae0", 70],
          [430, 1462, "Mid-Levels Escalator", 15, "#a9b4bf", -42], [508, 1285, "St", 20, "#d5dae0", 40],
          [48, 1003, "53", 13], [171, 1050, "33", 13], [90, 1100, "19", 13], [122, 1153, "20", 13], [242, 954, "29", 13], [320, 1014, "27", 13], [323, 904, "51a", 13], [409, 972, "58-60A", 13], [348, 1087, "23", 13], [436, 1116, "8", 13], [407, 1229, "18", 13], [426, 1259, "16", 13], [468, 1279, "14", 13], [394, 1299, "10", 13], [375, 1361, "6", 13], [209, 1365, "50", 13], [203, 1391, "56", 13], [42, 1330, "57", 13], [64, 1469, "47", 13], [385, 1448, "11", 13], [503, 1212, "Sh", 14],
        ]} />
        <rect x="41" y="860" width="70" height="56" rx="10" fill="#2b2c2f" /><circle cx="60" cy="891" r="9" fill="#fdd663" /><path d="M52 902a6 6 0 0 1 2-11 9 9 0 0 1 14 2 5 5 0 0 1 1 9Z" fill="#eef0f2" />
        <text x="88" y="897" fontSize="16" fontWeight="600" textAnchor="middle" fill="#e8eaed">22°</text>
        <text x="42" y="1503" fontSize="23" fontWeight="500" fill="#fff">Google</text>
        <circle cx="438" cy="909" r="14" fill="#81c995" /><text x="438" y="915" fontSize="17" fontWeight="700" textAnchor="middle" fill="#143">4</text>
        <circle cx="468" cy="892" r="25" fill="#2b2c2f" /><path d="M468 881 479 888 468 895 457 888ZM457 894 468 901 479 894" fill="none" stroke="#e8eaed" strokeWidth="3" />
        <circle cx="468" cy="961" r="25" fill="#2b2c2f" /><path d="M462 962 468 948 474 962Z" fill="#ea4335" /><path d="M462 962 468 976 474 962Z" fill="#e8eaed" />
        <circle cx="458" cy="1387" r="34" fill="#2b2c2f" /><path d="M468 1378 448 1387l9 3 3 9Z" fill="none" stroke="#e8eaed" strokeWidth="3" />
        <circle cx="458" cy="1477" r="34" fill="#8ab4f8" /><path d="M458 1464 471 1477 458 1490 445 1477Z" fill="#16233b" /><path d="M453 1481v-5h9M459 1472l4 4-4 4" stroke="#8ab4f8" strokeWidth="2.5" fill="none" />
      </MapArt>
    </Pin>
  );
}

/* ---------- gold route planner ---------- */

const GOLD = "#d59a1f";
const GoldBtn = styled.button<{ $on?: boolean; $r?: number; $w?: number }>`
  display: flex;
  flex: none;
  align-items: center;
  justify-content: center;
  gap: 2px;
  height: 16px;
  ${(p) => p.$w && css`width: ${p.$w}px;`}
  padding: 0 3px;
  border: 1px solid ${(p) => (p.$on ? GOLD : "#8a6a24")};
  border-radius: ${(p) => p.$r ?? 3}px;
  background: ${(p) => (p.$on ? GOLD : "transparent")};
  color: ${(p) => (p.$on ? "#fff" : GOLD)};
  font-size: 5px;
  line-height: 6px;
  font-weight: 600;
  white-space: nowrap;
`;
const TabBar = styled.nav<{ $h: number }>`
  display: grid;
  grid-template-columns: repeat(4, 1fr);
  align-items: start;
  justify-items: center;
  height: ${(p) => p.$h}px;
  padding-top: 3px;
  background: #2a2a2c;
  flex: none;
`;
const Tab = styled.button<{ $on?: boolean; $s: number }>`
  display: flex;
  flex-direction: column;
  align-items: center;
  gap: 1px;
  color: ${(p) => (p.$on ? GOLD : "#8b8b8e")};
  font-size: ${(p) => p.$s}px;
  line-height: ${(p) => p.$s + 1}px;
`;
function Tabs({ h, i, s }: { h: number; i: number; s: number }) {
  return (
    <TabBar $h={h}>
      <Tab $on $s={s}><Route size={i} />Travel</Tab>
      <Tab $s={s}><MessagesSquare size={i} />Chats</Tab>
      <Tab $s={s}><ShoppingBag size={i} />Shop</Tab>
      <Tab $s={s}><Settings size={i} />Settings</Tab>
    </TabBar>
  );
}
const Overlay = styled.div<{ $t: number; $l: number; $r?: number }>`
  position: absolute;
  top: ${(p) => p.$t}px;
  left: ${(p) => p.$l}px;
  right: ${(p) => p.$r ?? 0}px;
`;
const Gap = styled.div<{ $h: number; $w?: number }>`
  height: ${(p) => p.$h}px;
  width: ${(p) => p.$w ?? 0}px;
  flex: none;
`;
const Handle = styled.div`
  width: 16px;
  height: 2px;
  background: ${GOLD};
  margin: 3px auto;
  border-radius: 1px;
  flex: none;
`;
const TripSheet = styled.div`
  height: 54px;
  background: #38383a;
  flex: none;
`;
const TripBox = styled.div`
  display: flex;
  gap: 9px;
  margin: 1px 7px 0;
  height: 39px;
  border-radius: 6px;
  background: #1b1b1d;
  padding: 4px 6px;
  align-items: center;
`;
const Rule = styled.hr<{ $c?: string; $m?: number }>`
  width: 100%;
  border: 0;
  height: 1px;
  margin: ${(p) => p.$m ?? 2}px 0;
  background: ${(p) => p.$c ?? "#56565a"};
  flex: none;
`;
const RouteCard = styled.article`
  display: flex;
  flex-direction: column;
  height: 48px;
  flex: none;
  margin: 0 7px 5px 8px;
  padding: 4px 5px;
  border-radius: 5px;
  background: #3a3a3d;
`;
const RouteBox = styled.span`
  display: inline-flex;
  align-items: center;
  gap: 2px;
  height: 10px;
  padding: 0 3px;
  border: 1px solid #57575b;
  border-radius: 2px;
`;
const DepartRow = styled.div`
  display: flex;
  justify-content: space-between;
  align-items: center;
  height: 11px;
  border-radius: 2px;
  background: #2c2c2e;
  padding-left: 4px;
  margin-top: auto;
  font-size: 5px;
  line-height: 6px;
  color: #c9c9cc;
  white-space: nowrap;
`;
const DepartAt = styled.span`
  background: #1d1c19;
  height: 11px;
  line-height: 11px;
  padding: 0 4px;
  border-radius: 2px;
`;
const Rail = styled.i<{ $c: string }>`
  width: 1px;
  height: 6px;
  background: ${(p) => p.$c};
`;
const Walk = ({ n, s = 4 }: { n: string; s?: number }) => <Row><PersonStanding size={6} color={GOLD} strokeWidth={3} /><Txt $s={s} $w={700}>{n}</Txt></Row>;
const Chev = () => <ChevronRight size={5} strokeWidth={3} />;

function RouteOption(p: { min: string; fare: string; a: string; z: string; box: React.ReactNode; from: string; at: string }) {
  return (
    <RouteCard>
      <Row $j="space-between" $h={9}><Row $gap={2} $a="baseline"><Txt $s={7} $w={700}>{p.min}</Txt><Txt $s={4}>min</Txt></Row><Txt $s={4} $c="#bdbdc0">{p.fare}</Txt></Row>
      <Rule />
      <Row $h={14} $gap={2}><Walk n={p.a} /><Chev />{p.box}<Chev /><Walk n={p.z} /></Row>
      <DepartRow>{p.from}<DepartAt>Depart at <b>{p.at}</b></DepartAt></DepartRow>
    </RouteCard>
  );
}
const BusBox = ({ n }: { n: string }) => <RouteBox><Bus size={5} color="#4f93dd" strokeWidth={3} /><Txt $s={4} $w={700}>{n}</Txt></RouteBox>;

function RoutesPhone() {
  return (
    <Pin $x={1658} $y={308} $w={144} $h={314} $bg="#202022">
      <MapArt $h={50} viewBox="21 21 450 157" preserveAspectRatio="xMidYMid slice">
        <rect x="18" y="18" width="460" height="164" fill="#1f2022" />
        <path d="M21 80 200 60 471 40M80 178 60 21M200 178 180 21M21 130 260 100M330 21 345 178M400 21 430 178" stroke="#2c2c2e" strokeWidth="8" fill="none" />
        <Labels halo="#1f2022" fill="#59402c" hw={1} items={[[95, 102, "Hong Kong", 14], [100, 117, "Driving Palace", 13], [290, 50, "Shopping mall", 13], [405, 80, "朗豪坊", 13], [405, 94, "Hot pot for pots", 13], [180, 68, "Quick St", 13, "#707070", -10]]} />
      </MapArt>
      <Status time="14:56" pct="82" h={22} px={14} over />
      <Overlay $t={25} $l={8} $r={1}>
        <Row $j="space-between">
          <ChevronLeft size={8} color={GOLD} strokeWidth={3} />
          <Row $gap={9}><Ellipsis size={8} color={GOLD} strokeWidth={3} /><MessageSquareMore size={10} color={GOLD} />
            <GoldBtn $r={8} $w={54}><Calendar size={7} />Arrive: 18:30</GoldBtn></Row>
        </Row>
      </Overlay>
      <TripSheet>
        <Handle />
        <TripBox>
          <Col $a="center" $gap={1}><PersonStanding size={9} color={GOLD} /><Txt $s={6} $w={700} $c={GOLD}>⋮</Txt><MapPin size={9} color={GOLD} /></Col>
          <Col $grow>
            <Row $j="space-between"><Col><Txt $w={600} $c="#139ce6">Your Current Location</Txt><Txt $c="#1283c0">The University of Hong Kong</Txt></Col><Navigation size={8} color="#19a8f2" fill="#19a8f2" /></Row>
            <Rule />
            <Txt $w={600}>LANGHAM PLACE</Txt><Txt $c="#c4c4c6">8 ARGYLE STREET</Txt>
          </Col>
          <ArrowUpDown size={8} color={GOLD} />
        </TripBox>
      </TripSheet>
      <Gap $h={4} />
      <Row $gap={5} $px={7} $h={17}>
        <GoldBtn $r={8} $w={16} aria-label="Refresh"><RefreshCw size={7} /></GoldBtn>
        <GoldBtn $w={16} aria-label="Options"><SlidersHorizontal size={8} /></GoldBtn>
        <GoldBtn $on $w={43}><Star size={7} fill="#fff" />Suggested</GoldBtn>
        <GoldBtn $w={32}><PersonStanding size={7} />Faster</GoldBtn>
        <GoldBtn $w={16} aria-label="Cheaper"><User size={7} /></GoldBtn>
      </Row>
      <Gap $h={8} />
      <Col $grow>
        <RouteOption min="37" fare="$12.1" a="9" z="6" box={<BusBox n="970X" />} from="Depart from HKU Cente..." at="17:53" />
        <RouteOption min="39" fare="$12.1" a="9" z="6" box={<BusBox n="970" />} from="Depart from HKU Cente..." at="17:51" />
        <RouteOption min="41" fare="$13.2" a="7" z="2" from="Depart from HKU" at="17:49" box={
          <RouteBox><Walk n="5" /><Rail $c="#1d6fb8" /><Txt $s={4} $w={700}>ISL -</Txt><Rail $c="#e2231a" /><Txt $s={4} $w={700}>TWL -</Txt><Walk n="2" /></RouteBox>} />
      </Col>
      <Overlay $t={284} $l={0}><Tabs h={30} i={9} s={4} /></Overlay>
      <Overlay $t={309} $l={0}><HomeBar $w={52} /></Overlay>
    </Pin>
  );
}

/* ---------- Mong Kok map phone ---------- */

const Toast = styled.div`
  display: flex;
  align-items: center;
  gap: 4px;
  height: 23px;
  width: 91px;
  border-radius: 4px;
  background: #1c1c1e;
  padding: 0 5px;
`;
const GoldSearch = styled.label`
  display: flex;
  align-items: center;
  gap: 3px;
  height: 11px;
  margin: 0 5px;
  padding: 0 4px;
  border-radius: 3px;
  background: #1c1c1e;
`;
const Place = styled.button`
  display: flex;
  align-items: center;
  gap: 2px;
  flex: none;
  width: 39px;
  height: 12px;
  padding: 0 3px;
  border-radius: 3px;
  background: #3a3a3d;
  text-align: left;
`;
function MongKokPhone() {
  return (
    <Pin $x={1685} $y={676} $w={117} $h={255} $bg="#2a2a2c">
      <MapArt $h={186} viewBox="30 18 366 582" preserveAspectRatio="xMidYMid slice">
        <rect x="26" y="14" width="374" height="590" fill="#202124" />
        <path d="M75 110 130 105 140 165 70 170ZM110 18 150 18 145 40 115 45ZM240 510 310 505 315 560 250 565ZM270 140 300 135 305 180 275 190ZM360 345 396 335 396 400 365 410Z" fill="#20322e" />
        <g stroke="#54504a" fill="none">
          <path d="M30 195 396 105M30 335 396 270M30 505 230 470M30 70 240 30" strokeWidth="14" />
          <path d="M215 18 330 600M235 18 350 600" strokeWidth="13" />
          <path d="M100 100 150 480M150 180 185 480M190 170 220 400M70 200 90 500M240 180 260 300M300 160 330 280M30 430 200 400M60 420 100 600M350 270 396 460M280 120 396 90M130 18 160 180M340 30 360 160M30 240 100 230" strokeWidth="7" />
        </g>
        <path d="M30 485 45 600" stroke="#9a6a34" strokeWidth="13" />
        <g stroke="#16171a" strokeWidth="1.5" fill="none"><path d="M160 200 180 330M170 200 190 330M230 200 250 290M120 230 130 320M40 350 50 420M120 350 130 460M250 330 260 460M170 350 175 460M340 180 350 260M60 100V60M270 60 290 130M170 60 200 140M280 350 300 480" /></g>
        {[[283, 214], [286, 255], [207, 449], [340, 522], [239, 594], [317, 574]].map(([x, y]) => <rect key={y} x={x - 6} y={y - 6} width="12" height="12" rx="3" fill="#2f7de8" stroke="#bcd6fa" strokeWidth="1.5" />)}
        <circle cx="286" cy="295" r="10" fill="#b3123f" /><path d="M281 290h10M281 300h10M286 289v12" stroke="#fff" strokeWidth="2" /><rect x="249" y="198" width="6" height="6" fill="#e2618b" />
        <Drop x={177} y={379} c="#ee6593" r={10} /><Drop x={226} y={377} c="#5b92ee" r={10} /><Drop x={383} y={206} c="#f2a11e" r={10} />
        <Labels halo="#1b1c1e" fill="#7d5640" hw={2} items={[
          [244, 27, "菇妹小炒店", 11], [244, 41, "Shopping mall", 11], [335, 62, "牛扒店", 10], [330, 75, "Hotpot for jade", 10], [335, 87, "& street sale", 10],
          [100, 80, "Hang Tung", 11], [100, 93, "Building Notice", 11], [100, 107, "恆通大樓", 11], [158, 146, "Kan Hee House", 11], [170, 160, "瓊溪樓", 11],
          [330, 200, "Dee Den Sum", 12], [340, 214, "Mong Kok", 12], [352, 228, "點點心", 11], [193, 333, "Langham Place", 12], [220, 346, "朗豪坊", 11], [208, 360, "Shopping mall", 11],
          [30, 475, "hung Building", 11, undefined, 0, "start"], [30, 487, "樂大廈", 11, undefined, 0, "start"], [283, 480, "Yu Place", 11], [275, 493, "始創中心", 11], [330, 558, "先達廣場", 11],
          [362, 418, "Ladies' Mark", 12, "#1f9fb0"], [372, 432, "女人街", 11, "#1f9fb0"], [366, 446, "The market", 11, "#1f9fb0"], [350, 458, "clothing & souven", 10, "#1f9fb0"],
          [240, 293, "Mong Kok", 12, "#c8c8c8"], [262, 306, "旺角", 10, "#c8c8c8"], [250, 191, "A2", 11, "#c8c8c8"],
          [65, 188, "ong Kok Rd", 12, "#a8a8a8", -10], [72, 338, "Argyle St", 12, "#a8a8a8", -10], [355, 280, "Argyle St", 12, "#a8a8a8", -10], [160, 493, "Shantung St", 11, "#a8a8a8", -10], [85, 428, "Nelson St", 10, "#a8a8a8", -10], [160, 50, "Bute St", 10, "#a8a8a8", -10],
          [125, 270, "Portland St", 10, "#a8a8a8", 78], [160, 235, "Shanghai St", 10, "#a8a8a8", 78], [185, 235, "Reclamation", 10, "#a8a8a8", 78], [210, 220, "Fife Street", 10, "#a8a8a8", 75], [55, 110, "Canton Rd", 10, "#a8a8a8", 78], [102, 385, "Canton Rd", 10, "#a8a8a8", 75], [100, 450, "Canton Rd", 10, "#a8a8a8", 75], [386, 346, "Sai", 11], [384, 390, "信和", 10],
        ]} />
        {[[366, 109], [366, 155], [366, 517], [366, 565]].map(([x, y], i) => <g key={y}><circle cx={x} cy={y} r="18" fill="#1a1a1c" /><circle cx={x} cy={y} r="7" fill={i === 2 ? "#8a7bb0" : "none"} stroke={i === 2 ? "#c3b6de" : GOLD} strokeWidth="3" /></g>)}
      </MapArt>
      <Status time="14:57" pct="82" h={18} px={11} s={4} over />
      <Overlay $t={154} $l={4}>
        <Toast>
          <Txt $s={4} $c={GOLD}>⟨I</Txt>
          <Col><Txt $s={4} $w={600}>Last search</Txt><Txt $s={4}>Previous Location <Txt $s={4} $c={GOLD}>»</Txt> LANGHAM</Txt><Txt $s={4}>PLACE</Txt></Col>
        </Toast>
      </Overlay>
      <Overlay $t={185} $l={0}><Handle /></Overlay>
      <Row $h={16} $px={6} $j="space-between" $bg="#303033">
        <Row $gap={2}><PersonStanding size={6} color={GOLD} /><Txt $s={4} $w={600} $c={GOLD}>Your Current Location ›</Txt></Row>
        <Txt as="i" $s={5} $w={700} $c={GOLD}>Pilgrüst</Txt>
      </Row>
      <GoldSearch><MapPin size={6} color={GOLD} /><PlainInput $s={4} $c="#a2a2a6" aria-label="Search for destination" placeholder="Search for destination" /><Navigation size={5} fill="#fff" /></GoldSearch>
      <Gap $h={3} />
      <Row $gap={4} $px={5}>
        <Place><House size={7} color="#3fa9d8" /><Col><Txt $s={4} $w={700}>Home</Txt><Txt $s={3}>Lee Hysan ...</Txt></Col></Place>
        <Place><School size={8} color="#43b649" /><Col><Txt $s={4} $w={700}>School</Txt><Txt $s={3}>HKU</Txt></Col></Place>
        <Place><Briefcase size={7} color={GOLD} /><Txt $s={4} $w={700}>Office</Txt></Place>
      </Row>
      <Gap $h={2} />
      <Tabs h={21} i={8} s={4} />
      <HomeBar $w={33} />
    </Pin>
  );
}

/* ---------- itinerary phone ---------- */

const Itinerary = styled.div`
  display: grid;
  grid-template-columns: 16px 1fr;
  margin: 7px 4px 0 0;
`;
const StopName = styled.span`
  height: 11px;
  padding-left: 3px;
  border-radius: 2px;
  background: #323235;
  font-size: 6px;
  line-height: 11px;
  font-weight: 600;
  white-space: nowrap;
`;
const Ring = styled.span<{ $c: string }>`
  width: 10px;
  height: 10px;
  margin-left: 4px;
  border: 2px solid ${(p) => p.$c};
  border-radius: 50%;
`;
const Track = styled.span<{ $c: string; $dash?: boolean }>`
  margin-left: 8px;
  width: 2px;
  border-left: 1px ${(p) => (p.$dash ? "dashed" : "solid")} ${(p) => p.$c};
`;
const Coin = styled.button<{ $c: string }>`
  display: grid;
  place-items: center;
  width: 17px;
  height: 17px;
  border: 1px solid ${(p) => p.$c};
  border-radius: 50%;
  color: ${(p) => p.$c};
`;
const MainCard = styled.article`
  display: flex;
  flex-direction: column;
  width: 138px;
  height: 65px;
  flex: none;
  padding: 4px 5px 6px;
  border: 1px solid ${GOLD};
  border-radius: 7px;
  background: #3a3a3d;
`;
const PeekCard = styled.div`
  width: 20px;
  height: 63px;
  border-radius: 6px;
  background: #2e2e31;
  flex: none;
`;
const RouteTag = styled.span`
  width: 77px;
  height: 8px;
  border-radius: 2px;
  background: #fff3ac;
  border: 1px solid #4f93dd;
  color: #5b5b40;
  font-size: 4px;
  line-height: 6px;
  padding-left: 2px;
  white-space: nowrap;
`;
const Stage = ({ name, c }: { name: string; c: string }) => <><Ring $c={c} /><StopName>{name}</StopName></>;
const WalkStage = ({ min, m }: { min: string; m: string }) => (
  <>
    <Track $c="#77777b" $dash />
    <Row $h={21} $pl={3} $j="space-between">
      <Row $gap={4}><PersonStanding size={14} strokeWidth={1} /><Coin $c={GOLD} aria-label="Guide"><User size={9} /></Coin><Coin $c="#a99be0" aria-label="AR"><Navigation size={9} /></Coin><Coin $c={GOLD} aria-label="Look"><Binoculars size={9} /></Coin></Row>
      <Col $a="flex-end"><Txt><b>{min}</b> min</Txt><Txt $s={3} $c="#9a9a9d">{m}</Txt></Col>
    </Row>
  </>
);
function ItineraryPhone() {
  return (
    <Pin $x={2629} $y={280} $w={157} $h={224} $bg="#1d1d1f">
      <Row $h={11} $j="center"><Txt as="i" $w={700}>Pilgrüst</Txt></Row>
      <Row $gap={5} $pl={10}>
        <MainCard>
          <Row $j="space-between" $h={10}><Row $gap={2} $a="baseline"><Txt $s={8} $w={700}>37</Txt><Txt>min</Txt></Row><Txt $s={4} $c="#c4c4c6">$12.1</Txt></Row>
          <Rule />
          <Row $h={16} $gap={3}><Walk n="9" s={5} /><Chev /><BusBox n="970X" /><Chev /><Walk n="6" s={5} /></Row>
          <DepartRow>Depart from HKU Cent...<DepartAt>Depart at <b>17:53</b></DepartAt></DepartRow>
        </MainCard>
        <PeekCard />
      </Row>
      <Itinerary>
        <Stage name="Your Current Location" c="#fff" />
        <WalkStage min="9" m="535m" />
        <Stage name="HKU Centennial Campus, Pok Fu Lam Road" c="#4f8fdc" />
        <Track $c="#4f8fdc" />
        <Col>
          <Gap $h={6} />
          <Row $j="space-between"><Txt>Arriving in around <b>5</b> min</Txt><Txt $w={500}>Around <Txt $s={6} $c="#4f8fdc" $w={700}>17</Txt> min</Txt></Row>
          <Row $gap={6} $h={23} $pl={3}>
            <Bus size={14} color="#4f8fdc" strokeWidth={2} />
            <Col $gap={1}><RouteTag>970X Cheung Sha Wan (Kom ...</RouteTag><Txt $s={4} $c="#a5a5a8">Citybus</Txt></Col>
            <Col $a="flex-end" $grow><Txt $w={500}>Every <b>10</b> min</Txt><Txt $s={4} $c="#a5a5a8">$12.1</Txt></Col>
          </Row>
          <Gap $h={2} />
        </Col>
        <Ring $c="#4f8fdc" /><Row $h={11} $px={3}><Txt $s={4}>7 stop(s)</Txt></Row>
        <Stage name="Shantung Street, Nathan Road" c="#4f8fdc" />
        <WalkStage min="6" m="310m" />
        <Stage name="LANGHAM PLACE" c="#fff" />
      </Itinerary>
    </Pin>
  );
}

/* ---------- Central stops & ChorLand ---------- */

const Sheet = styled.div`
  display: flex;
  flex-direction: column;
  flex: none;
  margin-top: -3px;
  border-radius: 4px 4px 0 0;
  background: #202022;
`;
const PlaceTitle = styled.h3`
  font-size: 7px;
  line-height: 8px;
  font-weight: 600;
  flex: 1;
`;
const Pill = styled.button<{ $c: string; $on?: boolean }>`
  flex: 1;
  height: 14px;
  border: 1px solid ${(p) => p.$c};
  border-radius: 7px;
  font-size: 6px;
  line-height: 12px;
  font-weight: 600;
  color: ${(p) => (p.$on ? "#fff" : p.$c)};
  background: ${(p) => (p.$on ? p.$c : "transparent")};
`;
/* Stop sign on a pole */
const Sign = ({ x, y, t }: { x: number; y: number; t: string }) => (
  <g transform={`translate(${x} ${y})`}>
    <path d="M-5-24H5V44H-5Z" fill="#fff" /><path d="M-3-22H3V42H-3Z" fill={GOLD} />
    <path d="M-12-14H12L18 0 12 14H-12L-18 0Z" fill={GOLD} stroke="#f6dfa8" strokeWidth="2" />
    <text y="6" fontSize="15" fontWeight="700" textAnchor="middle" fill="#fff">{t}</text>
  </g>
);
const BigPin = ({ x, y }: { x: number; y: number }) => (
  <g transform={`translate(${x} ${y})`}><path d="M0 36C-6 22-21 16-21-2a21 21 0 0 1 42 0C21 16 6 22 0 36Z" fill="#c98f17" stroke="#fff" strokeWidth="3" /><circle r="7" cy="-3" fill="#fff" /></g>
);
function CentralPhone() {
  const signs: [number, number, string][] = [[311, 416, "A"], [281, 446, "B"], [268, 473, "C"], [232, 500, "D2"], [250, 513, "D1"], [283, 521, "G"], [347, 500, "E"], [383, 510, "F"], [394, 541, "H"], [469, 589, "K"], [560, 576, "J1"], [596, 598, "J2"], [603, 573, "J3"], [643, 573, "L"]];
  return (
    <Pin $x={2692} $y={536} $w={159} $h={343} $bg="#1d1d1f">
      <MapArt $h={250} viewBox="186 30 498 783" preserveAspectRatio="xMidYMid slice">
        <rect x="180" y="24" width="510" height="795" fill="#212325" />
        <path d="M590 24H690V120L640 70Z" fill="#141d40" />
        <path d="M590 650 684 630V740L600 745ZM560 460 640 480 620 520 550 500ZM440 450 490 420 480 480Z" fill="#20352f" />
        <g fill="none" stroke="#5b554e">
          <path d="M190 150C300 170 360 240 440 260S600 360 690 390" strokeWidth="22" /><path d="M340 30C400 100 480 120 550 140S640 180 690 200" strokeWidth="16" />
          <path d="M186 420C260 520 320 580 420 610L520 640 690 670" strokeWidth="20" /><path d="M186 760C280 780 320 720 420 720S500 780 600 770" strokeWidth="14" />
          <path d="M570 90V180C520 280 440 350 420 440M550 90C530 200 460 240 420 330M640 250 630 380 600 430M186 330 260 240 290 170M186 90 210 160M260 720 290 620 330 580M500 640 490 560 440 500M540 640 520 740M400 700 340 640M600 640 590 760" strokeWidth="10" />
        </g>
        <g fill="none" stroke="#a96c2a"><path d="M186 40C260 80 320 110 400 125" strokeWidth="28" /><path d="M230 24C300 60 360 90 430 140" strokeWidth="14" /><path d="M186 250C240 320 280 390 340 440 420 480 500 510 690 565" strokeWidth="24" /><path d="M670 270 690 280" strokeWidth="20" /></g>
        <path d="M350 440v40M365 440v40M382 445v40" stroke="#5b554e" strokeWidth="6" />
        <circle cx="570" cy="93" r="15" fill="#212325" stroke="#5b554e" strokeWidth="8" /><circle cx="209" cy="95" r="10" fill="none" stroke="#5b554e" strokeWidth="6" />
        <g fill="none" stroke="#16181a" strokeWidth="3"><path d="M200 450 280 570M300 220 380 300M450 150 520 200M340 370 420 400M480 320 560 370M300 620 380 700M440 740 500 800M620 420 680 450M220 600 260 680" /></g>
        <path d="M305 40h14v14q-2 8-7 10-5-2-7-10ZM184 245h9v14h-9ZM516 514h24v16h-24Z" fill="#f1c232" />
        <Drop x={650} y={76} c="#3aa757" r={11} /><Drop x={678} y={176} c="#14a6b8" r={11} /><Drop x={409} y={408} c="#78909c" r={12} /><Drop x={304} y={600} c="#5b92ee" r={12} /><Drop x={454} y={698} c="#78909c" r={12} /><Drop x={461} y={528} c="#ee6593" r={11} /><Drop x={655} y={798} c="#14a6b8" r={11} />
        <ellipse cx="339" cy="263" rx="9" ry="8" fill="#c2185b" /><ellipse cx="347" cy="543" rx="8" ry="7" fill="#c2185b" />
        <Labels halo="#1b1c1e" fill="#b57a55" hw={3} items={[
          [640, 220, "Hong Kon", 18], [610, 240, "Observation Whee", 17], [650, 260, "香港摩天輪", 15],
          [335, 412, "Jardine House", 18], [350, 430, "怡和大廈", 16], [369, 601, "LANDMARK", 18], [350, 620, "置地廣場", 17],
          [380, 703, "HSBC Building", 18], [380, 722, "滙豐 香港總行大廈", 16],
          [625, 697, "Chater Garden", 17, "#4c8a63"], [629, 716, "遮打花園", 17, "#4c8a63"],
          [282, 269, "Hong Kong", 18, "#d0d0d0"], [312, 540, "entral", 18, "#b5b5b5"], [320, 558, "中環", 16, "#b5b5b5"], [186, 613, "ng", 17, undefined, 0, "start"],
          [398, 78, "Man Po St", 15, "#b5b5b5", 30], [378, 250, "Man Cheung St", 17, "#b5b5b5", 25], [512, 602, "Chater Rd", 15, "#b5b5b5", 12], [246, 750, "Duddell St", 16, "#b5b5b5", -30], [258, 805, "ower Rd", 15, "#b5b5b5", -10],
          [610, 805, "en's Rd", 15, "#b5b5b5", -40], [670, 755, "ok", 15, "#14a6b8"],
        ]} />
        {signs.map(([x, y, t]) => <Sign key={t} x={x} y={y} t={t} />)}
        <BigPin x={437} y={523} />
        <circle cx="228" cy="141" r="25" fill="#1a1a1c" /><path d="M232 133 223 141 232 149" fill="none" stroke={GOLD} strokeWidth="3" />
        <circle cx="642" cy="768" r="26" fill="#1a1a1c" /><path d="M652 759 632 767l9 3 3 9Z" fill="none" stroke={GOLD} strokeWidth="3" />
      </MapArt>
      <Status time="14:44" pct="80" h={22} px={14} s={6} over />
      <Sheet>
        <Row $h={41} $px={9} $j="space-between"><PlaceTitle>Central</PlaceTitle><Row $gap={13}><BookmarkPlus size={8} /><Share2 size={8} color="#a5a5a8" /></Row></Row>
        <Row $h={23} $px={8} $gap={4} $a="flex-start"><Pill $c={GOLD}>FROM</Pill><Pill $c={GOLD} $on>TO</Pill><Pill $c="#c08ab8">AR</Pill><Pill $c="#2196d8">ETA</Pill></Row>
      </Sheet>
      <Tabs h={33} i={10} s={5} />
    </Pin>
  );
}
function ChorLandPhone() {
  return (
    <Pin $x={2645} $y={823} $w={167} $h={358} $bg="#2a2a2c">
      <MapArt $h={264} viewBox="36 929 522 826" preserveAspectRatio="xMidYMin slice">
        <rect x="30" y="925" width="534" height="836" fill="#232426" />
        <path d="M36 929H558V1010C420 1000 300 980 200 970L36 985Z" fill="#a5692b" /><path d="M36 965 80 965 110 1020 36 1040Z" fill="#34383a" />
        <path d="M100 1010C200 1020 360 1060 558 1090" stroke="#5e5a54" strokeWidth="42" fill="none" />
        <path d="M110 990 558 1070M100 1020 558 1095M130 929 400 980M300 929 540 1000" stroke="#7a5830" strokeWidth="2" fill="none" />
        {[120, 150, 200, 230, 280, 310, 340, 380].map((x) => <path key={x} d={`M${x} 1025l6 8-8 12`} stroke="#2b2b2b" strokeWidth="3" fill="none" />)}
        <g fill="none" stroke="#5a5650"><path d="M30 1270C200 1300 400 1350 564 1400" strokeWidth="32" /><path d="M425 1400C420 1480 400 1560 395 1600M270 1360C270 1440 240 1530 270 1560 330 1590 460 1610 560 1635" strokeWidth="20" /></g>
        <path d="M395 1620C375 1680 395 1720 380 1755" stroke="#5a5650" strokeWidth="4" strokeDasharray="10 9" fill="none" />
        <path d="M36 1530 130 1460 270 1435M36 1550 140 1510 265 1480M36 1440 120 1430" stroke="#46443f" strokeWidth="4" fill="none" />
        <g fill="#292b2d" stroke="#1b1c1e" strokeWidth="2"><path d="M80 1130 200 1110 260 1150 240 1230 120 1240ZM290 1130 420 1140 470 1200 440 1270 300 1240ZM300 1440 380 1450 375 1530 290 1520ZM450 1420 550 1440 540 1600 440 1580ZM100 1600 260 1580 250 1700 120 1740ZM60 1560 120 1500 160 1560ZM500 1150 558 1170V1290L490 1270Z" /></g>
        <path d="M152 1710q0-10 10-10t10 10v45h-20Z" fill="#3a3a3a" />
        <path d="M105 968h16v12q-2 8-8 10-6-2-8-10Z" fill="#f1c232" />
        {[[240, 1032], [244, 1074]].map(([x, y]) => <g key={x}><rect x={x - 6} y={y - 12} width="12" height="24" rx="3" fill="#e8e8e8" /><circle cx={x} cy={y - 7} r="3" fill="#ea4335" /><circle cx={x} cy={y} r="3" fill="#fbbc04" /><circle cx={x} cy={y + 7} r="3" fill="#34a853" /></g>)}
        {[[435, 1057], [489, 1082], [209, 1331], [252, 1335], [471, 1394], [557, 1414]].map(([x, y]) => <rect key={x} x={x - 8} y={y - 8} width="16" height="16" rx="3" fill="#2f7de8" stroke="#cfe0fa" strokeWidth="1.5" />)}
        <Drop x={216} y={1245} c="#f08a12" r={13} /><Drop x={441} y={1550} c="#f08a12" r={13} /><Drop x={40} y={1655} c="#f08a12" r={13} /><Drop x={92} y={1740} c="#78909c" r={13} />
        <Labels halo="#1b1c1e" fill="#6b5140" hw={2} items={[
          [177, 1127, "Hong Kong", 15], [177, 1145, "Industrial Building", 15], [177, 1164, "香港工業大廈", 15], [120, 1219, "Nice Garden", 15], [120, 1237, "居禮花園", 15], [36, 1154, "nsion", 15, undefined, 0, "start"],
          [237, 1238, "Katsuisen", 18, "#e08b3e", 0, "start"], [237, 1260, "(Kennedy Town)", 18, "#e08b3e", 0, "start"], [237, 1279, "活一鮮 (堅尼地城)", 15, "#e08b3e", 0, "start"],
          [79, 1412, "ChorLand Cookfood Stall", 17, "#c77a3b", 0, "start"], [232, 1430, "楚撚記大排檔", 15, "#c77a3b"], [322, 1477, "Fu Ga Building", 15], [322, 1496, "富嘉大廈", 15], [512, 1454, "Joy Fat Mansi", 15], [520, 1472, "再發大廈", 15],
          [36, 1524, "he Belcher's Block 8", 15, undefined, 0, "start"], [95, 1543, "寶翠園8座", 15], [166, 1636, "The Belcher's Block 6", 15], [166, 1654, "寶翠園 6 座", 15], [36, 1745, "her's", 17, "#c77a3b", 0, "start"], [540, 1328, "Dra", 15], [532, 1347, "Garde", 15], [536, 1366, "龍華", 15],
          [488, 1138, "Des Voeux Rd", 20, "#bdbdbd", 12], [354, 1352, "Queen's Rd W", 21, "#bdbdbd", 12], [415, 1480, "Woo Hop St", 18, "#bdbdbd", -70], [44, 1046, "Ri", 17, "#bdbdbd"],
        ]} />
        <BigPin x={297} y={1400} />
        <circle cx="80" cy="1045" r="26" fill="#1a1a1c" /><path d="M83 1036 74 1045 83 1054" fill="none" stroke={GOLD} strokeWidth="3" />
        <circle cx="514" cy="1700" r="27" fill="#1a1a1c" /><path d="M525 1690 503 1699l10 4 3 10Z" fill="none" stroke={GOLD} strokeWidth="3" />
      </MapArt>
      <Status time="14:59" pct="83" h={22} px={15} s={6} over />
      <Sheet>
        <Row $h={43} $px={9} $gap={12}><PlaceTitle>ChorLand Cookfood Stall 楚<br />撚記大排檔</PlaceTitle><BookmarkPlus size={8} /><Share2 size={8} color="#a5a5a8" /></Row>
        <Row $h={21} $px={8} $gap={4} $a="flex-start"><Pill $c={GOLD}>FROM</Pill><Pill $c={GOLD} $on>TO</Pill><Pill $c="#c08ab8">AR</Pill><Pill $c="#2196d8">ETA</Pill></Row>
      </Sheet>
      <Tabs h={30} i={10} s={5} />
      <HomeBar $w={60} />
    </Pin>
  );
}

/* ---------- MTR phones ---------- */

const NAVY = "#35588f";
const NavyHead = styled.div`
  background: ${NAVY};
  color: #fff;
  flex: none;
`;
const ListRow = styled.li<{ $h: number; $line?: boolean }>`
  display: flex;
  align-items: center;
  justify-content: space-between;
  height: ${(p) => p.$h}px;
  margin-left: 5px;
  padding-right: 5px;
  border-bottom: ${(p) => (p.$line ? "1px solid #ececec" : "0")};
  font-size: 5px;
  line-height: 6px;
  white-space: nowrap;
`;
const ExitTag = styled.b`
  background: #1c2f62;
  color: #fff;
  width: 7px;
  height: 7px;
  font-size: 4px;
  line-height: 7px;
  text-align: center;
  flex: none;
`;
const WhiteField = styled.label`
  display: flex;
  align-items: center;
  gap: 2px;
  height: 13px;
  margin: 2px;
  padding: 0 3px;
  border-radius: 3px;
  background: #fff;
  flex: 1;
`;
const AZ = styled.nav`
  display: flex;
  flex-direction: column;
  font-size: 3px;
  line-height: 4px;
  font-weight: 700;
  color: #3b84e0;
  padding-top: 57px;
`;
function LandmarkPhone() {
  const row = (n: React.ReactNode, e: string, h: number, line = true) => <ListRow $h={h} $line={line}><span>{n}</span><ExitTag>{e}</ExitTag></ListRow>;
  return (
    <Pin $x={3005} $y={100} $w={126} $h={276} $bg="#fff" $fg="#2b2b2b">
      <NavyHead>
        <Status time="16:38" pct="72" h={16} px={9} tone="#b9c4da" island />
        <Row $h={15} $px={6} $j="space-between"><Row $gap={4}><ChevronLeft size={7} strokeWidth={3} /><House size={9} strokeWidth={1} /></Row><Txt $w={500}>HKU</Txt><User size={9} strokeWidth={2} /></Row>
      </NavyHead>
      <Row $h={17} $bg="#c9c9cb"><WhiteField><Search size={4} color="#666" /><PlainInput $s={5} $c="#7a7a7d" aria-label="Search Exit Info" placeholder="Search Exit Info" /></WhiteField></Row>
      <Row $a="flex-start">
        <Col $grow as="ul">
          <ListRow $h={13}><b>Search by Landmark</b><span>Sort</span></ListRow>
          <ListRow $h={11}>A</ListRow>
          {row("Academic Terrace", "C1", 15, false)}
          <ListRow $h={11}>B</ListRow>
          {row("Belcher Bay Park", "C2", 18)}
          {row("Belcher's Street", "C2", 19)}
          {row("Best Western Plus Hotel Hong Kong", "B1", 18, false)}
          <ListRow $h={9}>C</ListRow>
          {row(<>Central &amp; Western District Health<br />Centre Express</>, "B2", 18)}
          {row(<>Central and Western District Promenade -<br />Western Wholesale Food Market Section</>, "B2", 20)}
          {row("Cheng Yu Tung Tower", "C1", 19)}
          {row("Chi Wah Learning Commons", "C1", 19)}
          {row("Chiu Sheung School, Hong Kong", "C1", 19)}
        </Col>
        <AZ aria-label="Index">{"ABCDEFGHIJKLMNOPQRSTUVWXYZ#".split("").map((c) => <span key={c}>{c}</span>)}</AZ>
      </Row>
      <Gap $h={11} />
      <HomeBar $w={45} $c="#111" />
    </Pin>
  );
}
const OutlineBtn = styled.button`
  flex: 1;
  height: 10px;
  border: 1px solid #67a5ef;
  border-radius: 2px;
  background: #fafcff;
  color: #3b84e0;
  font-size: 4px;
  line-height: 8px;
  font-weight: 600;
`;
const FinePrint = styled.p`
  font: 4px/4px "Liberation Sans", Arial, sans-serif;
  color: #9a9a9a;
  white-space: nowrap;
  padding-left: 6px;
`;
const ReportBtn = styled.button`
  align-self: flex-start;
  margin-left: 6px;
  width: 64px;
  height: 8px;
  border: 1px solid #9c9c9c;
  font-size: 4px;
  line-height: 6px;
  color: #555;
  display: flex;
  align-items: center;
  gap: 1px;
  padding: 0 1px;
  white-space: nowrap;
`;
const Thumb = styled.div`
  width: 23px;
  height: 25px;
  background: #fff;
  display: grid;
  place-items: center;
  flex: none;
`;
const Building = () => <svg width="11" height="18" viewBox="0 0 33 54" fill="none" stroke="#c4c4c6" strokeWidth="4"><path d="M10 2v14H4v10h12M22 2v14h7v10H16M16 10v28M4 40V30h25v10M6 46h22M6 52h22" /></svg>;
function ExitInfoPhone() {
  return (
    <Pin $x={3141} $y={100} $w={125} $h={276} $bg="#fff" $fg="#444">
      <NavyHead>
        <Status time="16:38" pct="72" h={16} px={8} tone="#b9c4da" island />
        <Row $h={15} $px={5} $j="space-between"><Row $gap={4}><ChevronLeft size={7} strokeWidth={3} /><House size={9} strokeWidth={1} /></Row><Txt $w={600}>Exit Info</Txt><Row $gap={4}><Star size={8} /><Upload size={9} strokeWidth={2} /></Row></Row>
      </NavyHead>
      <Row $h={35} $gap={4} $px={4} $bg="#e9edf2">
        <Thumb><Building /></Thumb>
        <Col $grow $gap={3}><Txt $s={6}>Academic Terrace</Txt><Row $gap={4}><OutlineBtn>Set From</OutlineBtn><OutlineBtn>Set To</OutlineBtn></Row></Col>
      </Row>
      <Row $h={17} $px={3} $gap={4}><Info size={6} /><Txt>HKU</Txt><Row $grow $j="flex-end" $gap={3}><ExitTag>C1</ExitTag><Txt $s={4}>~739 m</Txt><Crosshair size={8} color="#999" /></Row></Row>
      <Rule $c="#ececec" $m={0} />
      <Row $h={15} $px={4} $j="space-between"><MapPin size={6} /><ChevronRight size={5} color="#aaa" /></Row>
      <Rule $c="#ececec" $m={0} />
      <Gap $h={2} />
      <FinePrint>Remarks</FinePrint>
      <Gap $h={4} />
      <FinePrint>The walking path and distance between the destination and<br />the station exit are provided by Google and for reference only.</FinePrint>
      <Gap $h={10} />
      <FinePrint>If you need any assistance in using this application,<br />please press:</FinePrint>
      <Gap $h={4} />
      <ReportBtn><Info size={4} />Report app-related problem</ReportBtn>
      <Gap $h={121} />
      <HomeBar $w={45} $c="#111" />
    </Pin>
  );
}

const Section = styled.div<{ $h: number; $pt: number; $line?: boolean }>`
  height: ${(p) => p.$h}px;
  padding: ${(p) => p.$pt}px 4px 0;
  border-bottom: ${(p) => (p.$line ? "2px solid #f1f1f1" : "0")};
  color: #333;
  flex: none;
`;
const StationName = styled.h3`
  font-size: 5px;
  line-height: 6px;
  font-weight: 700;
  color: #111;
  padding-bottom: 3px;
`;
const Dot = styled.b<{ $c: string }>`
  width: 7px;
  height: 7px;
  border-radius: 50%;
  background: ${(p) => p.$c};
  color: #fff;
  font-size: 4px;
  line-height: 7px;
  text-align: center;
`;
const Crowd = () => (
  <svg width="13" height="11" viewBox="0 0 40 34">
    {[3, 9, 15, 21].map((x) => <g key={x}><circle cx={x} cy="5" r="2.5" fill="#777" /><path d={`M${x - 2} 9h4v20h-4z`} fill="#999" /></g>)}
    <path d="M27 1h10v6H27zM28 9h9v9h-9zM27 20h10v4l-4 9h-5z" fill="#f08a24" /><path d="M30 3h4M31 12h4" stroke="#fff" strokeWidth="2" />
  </svg>
);
const Wait = styled.div`
  display: grid;
  grid-template-columns: 9px 36px 1fr auto;
  align-items: center;
  height: 15px;
`;
const Line = ({ name, c, n, to }: { name: string; c: string; n: string; to: React.ReactNode }) => (
  <>
    <Row $h={8}><Txt $s={4}>{name}</Txt></Row>
    <Wait><Dot $c={c}>{n}</Dot><Txt $s={4} $c={c}>{to}</Txt><Crowd /><Row $gap={1}><Txt $w={700}>0-4</Txt><Txt $s={3}>min</Txt><ChevronRight size={4} color="#999" /></Row></Wait>
  </>
);
function WaitingPhone() {
  return (
    <Pin $x={3954} $y={38} $w={103} $h={226} $bg="#fff" $fg="#222">
      <NavyHead>
        <Status time="16:42" pct="70" h={14} px={7} tone="#b9c4da" island />
        <Row $h={12} $px={5} $gap={18}><ChevronLeft size={6} strokeWidth={3} /><Txt $s={4} $w={600}>Waiting Time Indicator</Txt></Row>
      </NavyHead>
      <Row $h={11} $px={2} $gap={2} $j="flex-end" $bg="#bfdfff"><RefreshCw size={4} color="#3b84e0" /><Txt $s={3} $c="#3a4a66">Last Updated: 2024/09/13 16:42</Txt><Gap $h={4} $w={16} /><Info size={6} /></Row>
      <Row $h={28} $j="center" $bg="#eeeeef"><Col><Txt $w={700}>Estimated Waiting Time</Txt><Txt $w={700}>at Interchange Platform</Txt></Col></Row>
      <Section $h={60} $pt={2} $line><StationName>Admiralty</StationName><Line name="Tsuen Wan Line" c="#e60012" n="1" to="to Tsuen Wan" /><Line name="Island Line" c="#0075c2" n="4" to="to Chai Wan" /></Section>
      <Section $h={63} $pt={5} $line><StationName>Kowloon Tong</StationName><Line name="East Rail Line" c="#53b7e8" n="1" to={<>to Lo Wu/ Lok<br />Ma Chau</>} /><Line name="Kwun Tong Line" c="#00a040" n="2" to="to Whampoa" /></Section>
      <Section $h={38} $pt={5}><StationName>Mong Kok</StationName><Line name="Tsuen Wan Line" c="#e60012" n="2" to="to Central" /></Section>
      <Overlay $t={221} $l={0}><HomeBar $w={36} $c="#111" /></Overlay>
    </Pin>
  );
}
const Legs = ({ c }: { c: string[] }) => (
  <svg width={c.length * 9 + 4} height="4" viewBox={`0 0 ${c.length * 27 + 12} 12`}>
    {c.map((f, i) => <g key={i}><path d={`M${i * 27 + 4} 6h25`} stroke={f} strokeWidth="5" /><circle cx={i * 27 + 4} cy="6" r="3" fill="#fff" stroke={f} strokeWidth="2" /></g>)}
  </svg>
);
const Trip = ({ t, m, c }: { t: string; m: string; c: string[] }) => (
  <Col $gap={2} $px={3}>
    <Row $j="space-between" $h={8}><Txt $s={3} $c="#333">{t}</Txt><Row><Txt $s={4} $w={700}>~{m}</Txt><Txt $s={3}>mins</Txt><ChevronRight size={3} color="#999" /></Row></Row>
    <Legs c={c} />
  </Col>
);
const DetailsBtn = styled.button`
  width: 17px;
  height: 7px;
  border: 1px solid #888;
  border-radius: 4px;
  font-size: 3px;
  line-height: 5px;
`;
const Banner = styled.svg`
  width: 64px;
  height: 18px;
  margin: 0 auto;
`;
function TripPhone() {
  return (
    <Pin $x={3954} $y={299} $w={79} $h={168} $bg="#fff" $fg="#222">
      <NavyHead>
        <Status time="16:14" pct="80" h={9} px={9} s={4} tone="#b9c4da" plain />
        <Row $h={10} $px={4} $j="space-between"><Row $gap={2}><ChevronLeft size={5} strokeWidth={3} /><House size={6} /></Row><Txt $s={3} $w={600}>Trip Planner</Txt><Row $gap={2}><BookmarkPlus size={6} /><Upload size={6} /></Row></Row>
      </NavyHead>
      <Row $h={11} $px={10} $j="space-between" $bg="#f8f8f8"><Txt $s={3}>香港大學</Txt><ArrowRight size={5} /><Col $a="center"><Txt $s={3}>荔枝角</Txt><Txt $s={3}>Lai Chi Kok</Txt></Col></Row>
      <Row $h={13} $px={3} $j="space-between" $bg="#f1f1f2"><Txt $s={3} $w={600}>Fare</Txt><Txt $s={3} $c="#3b84e0">Setting</Txt></Row>
      <Row $h={9} $px={3} $j="space-between"><Txt $s={3}>Adult, Octopus</Txt><Row $gap={1}><Txt $s={3}>HK$</Txt><Txt $w={700}>15.8</Txt><ChevronRight size={3} color="#999" /></Row></Row>
      <Row $h={12} $px={3} $j="space-between" $bg="#f1f1f2"><Txt $s={3} $w={600}>Suggested Route</Txt><Txt $s={2} $c="#888">Estimated Transit Time</Txt></Row>
      <Trip t="1 interchange | 4 mins walking" m="29" c={["#1d6fb8", "#e2231a"]} />
      <Gap $h={6} />
      <Row $h={8} $px={3} $bg="#f1f1f2"><Txt $s={3} $w={600}>Other Route(s)</Txt></Row>
      <Trip t="2 interchanges | 10 mins walking" m="34" c={["#1d6fb8", "#bbb", "#f08a24", "#e2231a"]} />
      <Gap $h={5} />
      <Trip t="4 interchanges | 7 mins walking" m="39" c={["#1d6fb8", "#4fb8e0", "#b0503a", "#2fa34a", "#e2231a"]} />
      <Gap $h={4} />
      <Row $h={6} $px={3} $bg="#f1f1f2"><Txt $s={3} $c="#777">First/Last Train Time and Route</Txt></Row>
      <Row $h={10} $px={3} $j="space-between"><Txt $s={3}>HKU ➔ Lai Chi Kok</Txt><DetailsBtn>Details</DetailsBtn></Row>
      <Banner viewBox="0 0 202 56">
        <rect width="202" height="56" fill="#f3faf3" /><path d="M130 56 160 36H202V56Z" fill="#0e9b57" />
        <path d="M8 10h50v5H8zM8 18h56v5H8zM8 28h44v4H8zM8 36h50v4H8zM8 44h40v4H8zM150 34h44v5h-44z" fill="#37a96a" />
        <circle cx="105" cy="20" r="17" fill="#7a3f24" /><circle cx="105" cy="22" r="12" fill="#f7c59f" /><path d="M82 56 90 36H122L130 56Z" fill="#35b04a" /><rect x="94" y="38" width="26" height="16" rx="4" fill="#f0b22c" /><path d="M172 6h14v12h-14z" fill="#2b4c8c" />
      </Banner>
      <Gap $h={3} />
      <HomeBar $w={27} $c="#111" />
    </Pin>
  );
}

/* ---------- page ---------- */

function VerdictNotes({ x, good, bad }: { x: number; good: number; bad: number }) {
  return (
    <>
      <Note $x={x} $y={good} $tone={GREEN}><NoteTitle>things that work</NoteTitle></Note>
      <Note $x={x} $y={bad} $tone={RED}><NoteTitle>things that don’t work</NoteTitle></Note>
    </>
  );
}

export default function App() {
  return (
    <Board>
      <GlobalStyle />
      <StationCard />
      <HongikMap />
      <CoastMap />
      <Note $x={490} $y={196} $tone={BLUE}>
        <NoteTitle $tone={GREEN}>things that work</NoteTitle>
        <NoteLine $in={131}>what exit to take</NoteLine>
        <ul><NoteBullet>would be nicer if it was like naver maps where<br />the subway station map is overlayed</NoteBullet></ul>
        <NoteLine $in={33}>quick access buttons</NoteLine>
      </Note>
      <Note $x={490} $y={433} $tone={RED}><NoteTitle>things that don’t work</NoteTitle></Note>
      <Note $x={523} $y={749} $tone={RED}><p>can’t do multiple stops</p><p>difficult to share bus routes</p></Note>
      <TaxiPhone />
      <SearchCard />
      <JunctionMap />
      <StauntonMap />
      <RoutesPhone />
      <MongKokPhone />
      <VerdictNotes x={1916} good={455} bad={577} />
      <ItineraryPhone />
      <CentralPhone />
      <ChorLandPhone />
      <LandmarkPhone />
      <ExitInfoPhone />
      <VerdictNotes x={3312} good={283} bad={348} />
      <VerdictNotes x={3221} good={868} bad={1077} />
      <WaitingPhone />
      <TripPhone />
      <Connectors viewBox="0 0 4278 1384">
        <path d="M369 108 407 143M338 974 347 972M1235 438 1252 442M1201 949 1248 959" strokeWidth="2" fill="none" />
        <path d="M1866 558h17M1854 814 1883 800M2745 483h17M2811 768 2828 766M2761 986 2828 1006M4146 153 4152 149M4130 341 4150 340" strokeWidth="4" fill="none" />
      </Connectors>
    </Board>
  );
}
